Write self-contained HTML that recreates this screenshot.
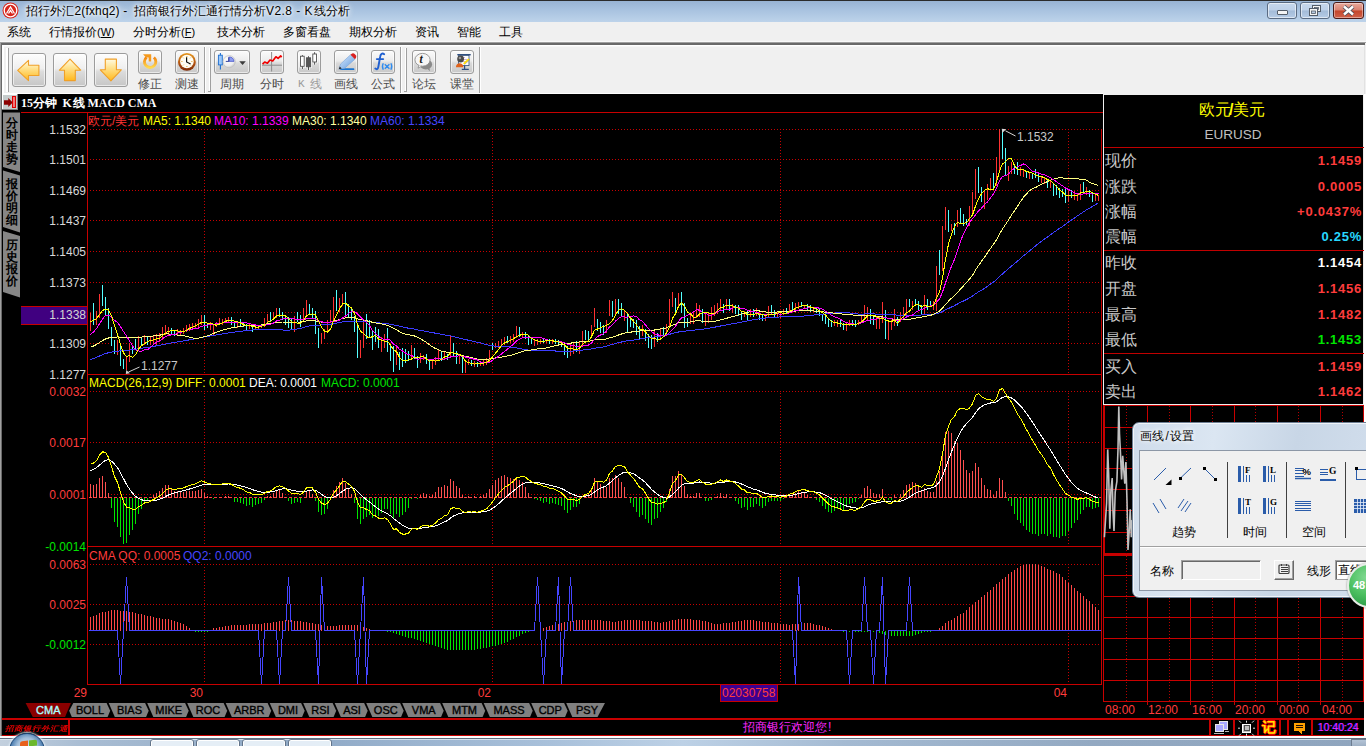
<!DOCTYPE html><html><head><meta charset="utf-8"><title>招行外汇2</title><style>
*{box-sizing:border-box}
html,body{margin:0;padding:0}
body{width:1366px;height:746px;overflow:hidden;background:#000;font-family:"Liberation Sans",sans-serif;font-size:12px;position:relative}
.a{position:absolute;white-space:nowrap}
.t{position:absolute;white-space:nowrap;line-height:14px;height:14px}
.r{text-align:right}
.cj{text-align:justify;text-align-last:justify}
#title{left:0;top:0;width:1366px;height:22px;background:linear-gradient(#98b3d3,#a9c3e0 45%,#bdd3ea);border-top:1px solid #2b2b2b}
#menu{left:0;top:22px;width:1366px;height:21px;background:#f0f0f0}
#tb{left:0;top:43px;width:1366px;height:51px;background:#f0f0f0}
.bigbtn{position:absolute;top:53px;width:34px;height:34px;border:1px solid #9c9c9c;border-radius:3px;background:linear-gradient(#fdfdfd,#efefef 45%,#dcdcdc 55%,#c6c6c6);box-shadow:inset 0 0 0 1px rgba(255,255,255,.6)}
.smbtn{position:absolute;top:50px;width:24px;height:24px;border:1px solid #9c9c9c;border-radius:3px;background:linear-gradient(#fbfbfb,#ececec 45%,#dadada 55%,#c8c8c8);box-shadow:inset 0 0 0 1px rgba(255,255,255,.6)}
.lbl{position:absolute;top:77px;height:14px;line-height:14px;color:#4a4a4a;font-size:12px;white-space:nowrap}
.yl{position:absolute;left:21px;width:65px;text-align:right;height:14px;line-height:14px;font-size:12px;color:#d8d8d8}
.row{position:absolute;left:1104px;width:258px;height:20px}
.row .k{position:absolute;left:1px;top:0;width:32px;font-size:16px;line-height:20px;color:#c8c8c8}
.row .v{position:absolute;right:0px;top:2px;font-size:13px;line-height:16px;font-weight:bold;letter-spacing:0.75px}
.tab{position:absolute;top:704px;height:13px;line-height:13px;font-size:11px;color:#000;text-align:center;-webkit-text-stroke:0.35px currentColor}
</style></head><body>
<div id="title" class="a"></div>
<svg class="a" style="left:2px;top:2px" width="17" height="17" viewBox="0 0 17 17"><circle cx="8.5" cy="8.5" r="8" fill="#d8261c"/><circle cx="8.5" cy="8.5" r="6.3" fill="none" stroke="#fff" stroke-width="1.3"/><path d="M4.5 11.5 L8.5 5 L12.5 11.5 M6.5 11.5 L8.5 8.5 L10.5 11.5" stroke="#fff" stroke-width="1.3" fill="none"/></svg>
<div class="t cj" style="left:26px;top:4px;font-size:12px;color:#000;text-shadow:0 0 6px #fff,0 0 6px #fff,0 0 3px #fff;width:48px">招行外汇</div>
<div class="t" style="left:74.5px;top:4px;font-size:12px;color:#000;text-shadow:0 0 6px #fff,0 0 6px #fff,0 0 3px #fff;letter-spacing:.15px">2(fxhq2) -</div>
<div class="t cj" style="left:134px;top:4px;font-size:12px;color:#000;text-shadow:0 0 6px #fff,0 0 6px #fff,0 0 3px #fff;width:132px">招商银行外汇通行情分析</div>
<div class="t" style="left:266px;top:4px;font-size:12px;color:#000;text-shadow:0 0 6px #fff,0 0 6px #fff,0 0 3px #fff;letter-spacing:.45px">V2.8 - K</div>
<div class="t cj" style="left:314px;top:4px;font-size:12px;color:#000;text-shadow:0 0 6px #fff,0 0 6px #fff,0 0 3px #fff;width:36px">线分析</div>
<div class="a" style="left:1267px;top:2px;width:30px;height:17px;border:1px solid #5a6b82;border-radius:3px;background:linear-gradient(#c6d7ec,#bdd0e8 48%,#a3bbd8 52%,#b6cce6);box-shadow:inset 0 0 0 1px rgba(255,255,255,.55)"></div>
<div class="a" style="left:1277px;top:10px;width:11px;height:5px;border:1px solid #545d69;border-radius:1px;background:#f4f4f4"></div>
<div class="a" style="left:1300px;top:2px;width:30px;height:17px;border:1px solid #5a6b82;border-radius:3px;background:linear-gradient(#c6d7ec,#bdd0e8 48%,#a3bbd8 52%,#b6cce6);box-shadow:inset 0 0 0 1px rgba(255,255,255,.55)"></div>
<svg class="a" style="left:1308px;top:4px" width="14" height="13" viewBox="0 0 14 13"><rect x="4.5" y="1.5" width="8" height="6" fill="#f4f4f4" stroke="#545d69"/><rect x="6.5" y="3.5" width="4" height="2" fill="#b8cbe2" stroke="#545d69" stroke-width=".8"/><rect x="1.5" y="4.5" width="8" height="7" fill="#f4f4f4" stroke="#545d69"/><rect x="3.5" y="7" width="4" height="2.5" fill="#b8cbe2" stroke="#545d69" stroke-width=".8"/></svg>
<div class="a" style="left:1333px;top:2px;width:31px;height:17px;border:1px solid #4a1a18;border-radius:3px;background:linear-gradient(#e7a99c,#d9806f 48%,#c4452b 52%,#d0614a);box-shadow:inset 0 0 0 1px rgba(255,255,255,.4)"></div>
<svg class="a" style="left:1342px;top:5px" width="13" height="11" viewBox="0 0 13 11"><path d="M2 1.5 L11 9.5 M11 1.5 L2 9.5" stroke="#4c4f5c" stroke-width="4.2"/><path d="M2 1.5 L11 9.5 M11 1.5 L2 9.5" stroke="#fff" stroke-width="2.4"/></svg>
<div id="menu" class="a"></div>
<div class="t cj" style="left:7px;top:25px;color:#000;width:24px">系统</div>
<div class="t cj" style="left:49px;top:25px;color:#000;width:48px">行情报价</div>
<div class="t cj" style="left:133px;top:25px;color:#000;width:48px">分时分析</div>
<div class="t cj" style="left:217px;top:25px;color:#000;width:48px">技术分析</div>
<div class="t cj" style="left:283px;top:25px;color:#000;width:48px">多窗看盘</div>
<div class="t cj" style="left:349px;top:25px;color:#000;width:48px">期权分析</div>
<div class="t cj" style="left:415px;top:25px;color:#000;width:24px">资讯</div>
<div class="t cj" style="left:457px;top:25px;color:#000;width:24px">智能</div>
<div class="t cj" style="left:499px;top:25px;color:#000;width:24px">工具</div>
<div class="t" style="left:97px;top:25px;color:#000;font-size:11px">(<u>W</u>)</div>
<div class="t" style="left:181px;top:25px;color:#000;font-size:11px">(<u>F</u>)</div>
<div id="tb" class="a"></div>
<div class="a" style="left:0;top:41px;width:1366px;height:1px;background:#f8f8f8"></div>
<div class="a" style="left:0;top:42px;width:1366px;height:1px;background:#a0a0a0"></div>
<div class="a" style="left:1px;top:43px;width:1364px;height:2px;background:#696969"></div>
<div class="a" style="left:2px;top:45px;width:1362px;height:2px;background:linear-gradient(#fff 50%,#f7f7f7 50%)"></div>
<div class="a" style="left:1364px;top:45px;width:2px;height:49px;background:#f0f0f0;border-left:1px solid #e2e2e2"></div>
<div class="a" style="left:0px;top:42px;width:1px;height:52px;background:#a0a0a0"></div>
<div class="a" style="left:1px;top:43px;width:1px;height:51px;background:#696969"></div>
<div class="a" style="left:2px;top:45px;width:2px;height:49px;background:#fff"></div>
<div class="a" style="left:6px;top:48px;width:2px;height:44px;background:#fff"></div>
<div class="a" style="left:8px;top:48px;width:1px;height:44px;background:#a0a0a0"></div>
<div class="bigbtn" style="left:12px"><svg width="32" height="32" viewBox="0 0 32 32" style="position:absolute;left:0;top:0"><defs><linearGradient id="ag0" x1="0" y1="0" x2="0" y2="1"><stop offset="0" stop-color="#fffbe4"/><stop offset=".4" stop-color="#ffe28e"/><stop offset="1" stop-color="#ffb81c"/></linearGradient></defs><path d="M4.7 16.4 L15.5 6.3 L15.5 11.2 L25.9 11.2 L25.9 21.5 L15.5 21.5 L15.5 26.600 Z" fill="url(#ag0)" stroke="#f0a028" stroke-width="1.1" stroke-linejoin="round"/></svg></div>
<div class="bigbtn" style="left:53px"><svg width="32" height="32" viewBox="0 0 32 32" style="position:absolute;left:0;top:0"><defs><linearGradient id="ag90" x1="0" y1="0" x2="0" y2="1"><stop offset="0" stop-color="#fffbe4"/><stop offset=".4" stop-color="#ffe28e"/><stop offset="1" stop-color="#ffb81c"/></linearGradient></defs><path d="M16 5.1 L26.7 16.2 L21.3 16.2 L21.3 26.600 L10.5 26.600 L10.5 16.2 L5.4 16.2 Z" fill="url(#ag90)" stroke="#f0a028" stroke-width="1.1" stroke-linejoin="round"/></svg></div>
<div class="bigbtn" style="left:94px"><svg width="32" height="32" viewBox="0 0 32 32" style="position:absolute;left:0;top:0"><defs><linearGradient id="ag270" x1="0" y1="0" x2="0" y2="1"><stop offset="0" stop-color="#fffbe4"/><stop offset=".4" stop-color="#ffe28e"/><stop offset="1" stop-color="#ffb81c"/></linearGradient></defs><path d="M15.9 26.9 L5.3 15.8 L10.3 15.8 L10.3 5.1 L21.4 5.1 L21.4 15.8 L26.3 15.8 Z" fill="url(#ag270)" stroke="#f0a028" stroke-width="1.1" stroke-linejoin="round"/></svg></div>
<div class="smbtn" style="left:138px"><svg width="22" height="22" viewBox="0 0 22 22" style="position:absolute;left:0;top:0"><defs><linearGradient id="gfx" x1="0" y1="0" x2="0" y2="1"><stop offset="0" stop-color="#f28410"/><stop offset="1" stop-color="#ffd850"/></linearGradient></defs><path d="M7.6 6.3 A5.700 5.700 0 1 0 14.9 6.5" fill="none" stroke="url(#gfx)" stroke-width="2.9"/><path d="M4 3.300 L12.200 3.300 L12.200 10.500 L9.700 10.500 L9.700 6.600 L7 6.600 Z" fill="#f59a1e"/></svg></div>
<div class="lbl cj" style="left:138px;width:24px;color:#4a4a4a">修正</div>
<div class="smbtn" style="left:175px"><svg width="22" height="22" viewBox="0 0 22 22" style="position:absolute;left:0;top:0"><defs><linearGradient id="gck" x1="0" y1="0" x2="0" y2="1"><stop offset="0" stop-color="#e89a20"/><stop offset=".6" stop-color="#b05010"/><stop offset="1" stop-color="#7a2a08"/></linearGradient></defs><circle cx="10.900" cy="10.900" r="8.900" fill="url(#gck)"/><circle cx="10.900" cy="10.500" r="6.800" fill="#fffef6"/><path d="M10.900 5 v1 M10.900 15 v1 M5.400 10.500 h1 M15.400 10.500 h1 M7 6.600 l.7 .7 M14.800 6.600 l-.7 .7 M7 14.400 l.7 -.7 M14.800 14.400 l-.7 -.7" stroke="#e8a020" stroke-width="1"/><path d="M10.600 6.200 V11 L14.600 13" stroke="#111" stroke-width="1.2" fill="none"/></svg></div>
<div class="lbl cj" style="left:175px;width:24px;color:#4a4a4a">测速</div>
<div class="smbtn" style="left:260px"><svg width="22" height="22" viewBox="0 0 22 22" style="position:absolute;left:0;top:0"><path d="M10.600 1 V20.500 M1 14.200 H21" stroke="#8c8c8c" stroke-width="1"/><path d="M1.600 13.200 L3.700 11 L6.400 12.200 L9 9 L11.700 10 L14.900 5.800 L17.100 7.400 L19.700 4.900 L20.600 6.300" stroke="#f00000" stroke-width="1.700" fill="none" stroke-linejoin="round"/></svg></div>
<div class="lbl cj" style="left:260px;width:24px;color:#4a4a4a">分时</div>
<div class="smbtn" style="left:297px"><svg width="22" height="22" viewBox="0 0 22 22" style="position:absolute;left:0;top:0"><g stroke="#fff" stroke-width="2.400" opacity=".8"><path d="M4.400 4.100 V18 M10.500 5.200 V19 M16.600 1.200 V13.700"/><rect x="2.500" y="5.200" width="3.700" height="10.100" fill="#fff"/><rect x="8.400" y="6.800" width="4.200" height="9" fill="#fff"/><rect x="14.800" y="3" width="3.700" height="8" fill="#fff"/></g><path d="M4.400 4.100 V18 M10.500 5.200 V19 M16.600 1.200 V13.700" stroke="#505050" stroke-width="1"/><rect x="2.500" y="5.200" width="3.700" height="10.100" fill="#fff" stroke="#505050" stroke-width=".9"/><rect x="8.400" y="6.800" width="4.200" height="9" fill="#555" stroke="#505050" stroke-width=".9"/><rect x="14.800" y="3" width="3.700" height="8" fill="#fff" stroke="#505050" stroke-width=".9"/></svg></div>
<div class="lbl" style="left:297px;width:24px;color:#9a9a9a"></div>
<div class="smbtn" style="left:334px"><svg width="22" height="22" viewBox="0 0 22 22" style="position:absolute;left:0;top:0"><defs><linearGradient id="gpn" x1="0" y1="0" x2="1" y2="1"><stop offset="0" stop-color="#dcebfb"/><stop offset=".5" stop-color="#9fc3ee"/><stop offset="1" stop-color="#5f96dc"/></linearGradient></defs><path d="M6 18.200 H18.500" stroke="#1a74d0" stroke-width="1.800" stroke-linecap="round"/><path d="M3.900 18.200 L5.600 13 L15.500 3.800 L20 8.200 L9.600 17.200 Z" fill="url(#gpn)" stroke="#7aa4d8" stroke-width=".6"/><path d="M15.500 3.800 L17.100 2.500 Q18.500 1.900 19.700 3 L21 4.400 Q21.700 5.600 21 6.800 L20 8.200 Z" fill="#d82020"/><path d="M3.900 18.200 L4.700 15.600 L6.700 17.500 Z" fill="#222"/></svg></div>
<div class="lbl cj" style="left:334px;width:24px;color:#4a4a4a">画线</div>
<div class="smbtn" style="left:371px"><svg width="22" height="22" viewBox="0 0 22 22" style="position:absolute;left:0;top:0"><path d="M12.200 3.200 C10.300 1.800 8.600 2.800 8.200 5.500 L6.300 16 C5.900 18.400 4.600 18.600 3.300 17.600 M4.800 8.100 H11.200" stroke="#1f5fd0" stroke-width="1.900" fill="none" stroke-linecap="round"/><g stroke="#2f8cf0" stroke-width="1.300" fill="none"><path d="M11.300 12.300 Q9.500 15.500 11.300 18.800 M18.900 12.300 Q20.700 15.500 18.900 18.800 M12.800 13.300 L17.400 17.800 M17.400 13.300 L12.800 17.800"/></g></svg></div>
<div class="lbl cj" style="left:371px;width:24px;color:#4a4a4a">公式</div>
<div class="smbtn" style="left:412px"><svg width="22" height="22" viewBox="0 0 22 22" style="position:absolute;left:0;top:0"><ellipse cx="12.900" cy="13.400" rx="6.200" ry="5" fill="#8a8a8a"/><path d="M14 17.500 L17 20.200 L16.500 17" fill="#8a8a8a"/><ellipse cx="9.500" cy="8.800" rx="7.600" ry="6.400" fill="#f6f6f6" stroke="#8e8e8e" stroke-width=".9"/><path d="M6 14 L5 17.200 L9 15" fill="#f6f6f6" stroke="#8e8e8e" stroke-width=".8"/><text x="6.500" y="12.400" font-size="11.500" font-weight="bold" font-style="italic" font-family="Liberation Serif" fill="#151515">t</text></svg></div>
<div class="lbl cj" style="left:412px;width:24px;color:#4a4a4a">论坛</div>
<div class="smbtn" style="left:450px"><svg width="22" height="22" viewBox="0 0 22 22" style="position:absolute;left:0;top:0"><rect x="6.300" y="3" width="13.400" height="1.400" fill="#2f4f7f"/><rect x="7.600" y="4.400" width="10.400" height="10.200" fill="#fdfdff" stroke="#2f4f7f" stroke-width=".8"/><path d="M9 6.500 H14 M9 8.500 H16.500 M9 10.500 H15" stroke="#c8a0c0" stroke-width=".8"/><path d="M13.600 14.600 V18.400 M10.800 18.400 H17.800" stroke="#2f4f7f" stroke-width="1.200"/><circle cx="9.600" cy="8" r="3.400" fill="#4a4a4a"/><circle cx="8.900" cy="7" r="1.300" fill="#9a9a9a"/><path d="M4.900 16.300 C4.900 11 12.400 11 12.400 16.300 Z" fill="#e0621a"/><path d="M12.700 12.800 L17.900 8" stroke="#ffe000" stroke-width="1.700"/><path d="M12.700 12.800 L17.900 8" stroke="#806000" stroke-width=".4" transform="translate(.8 .8)"/></svg></div>
<div class="lbl cj" style="left:450px;width:24px;color:#4a4a4a">课堂</div>
<div class="smbtn" style="left:214px;width:36px"><svg width="34" height="22" viewBox="0 0 34 22" style="position:absolute;left:0;top:0"><defs><radialGradient id="gpc" cx=".4" cy=".35" r=".7"><stop offset="0" stop-color="#fff"/><stop offset=".7" stop-color="#ececec"/><stop offset="1" stop-color="#bdbdbd"/></radialGradient></defs><path d="M5.400 2 V18.500" stroke="#1f6fd0" stroke-width="1.100"/><rect x="3.400" y="4.200" width="3.900" height="9.700" fill="#9cc8fa" stroke="#1f6fd0" stroke-width=".9"/><circle cx="14.200" cy="10.700" r="6.100" fill="url(#gpc)" stroke="#c4c4c4" stroke-width=".8"/><path d="M13.800 10.400 L13.800 6 A5 5 0 0 1 19 10.400 Z" fill="#8c9cf0" stroke="#3040c0" stroke-width=".6"/><path d="M13.800 6.500 V10.400 H10.800" stroke="#203090" stroke-width=".9" fill="none"/><path d="M24.300 10.200 L30.800 10.200 L27.550 13.900 Z" fill="#3c3c3c"/></svg></div>
<div class="lbl cj" style="left:220px;width:24px">周期</div>
<div class="lbl" style="left:298px;color:#9a9a9a;font-family:'Liberation Mono',monospace;font-size:11px">K</div>
<div class="lbl" style="left:309.5px;color:#9a9a9a">线</div>
<div class="a" style="left:204px;top:47px;width:1px;height:47px;background:#a0a0a0"></div>
<div class="a" style="left:205px;top:47px;width:1px;height:47px;background:#fff"></div>
<div class="a" style="left:208px;top:48px;width:3px;height:44px;border-right:1px solid #a0a0a0;border-bottom:1px solid #a0a0a0"></div>
<div class="a" style="left:209px;top:48px;width:1px;height:43px;background:#fff"></div>
<div class="a" style="left:400px;top:47px;width:1px;height:47px;background:#a0a0a0"></div>
<div class="a" style="left:401px;top:47px;width:1px;height:47px;background:#fff"></div>
<div class="a" style="left:404px;top:48px;width:3px;height:44px;border-right:1px solid #a0a0a0;border-bottom:1px solid #a0a0a0"></div>
<div class="a" style="left:405px;top:48px;width:1px;height:43px;background:#fff"></div>
<div class="a" style="left:479px;top:47px;width:1px;height:47px;background:#a0a0a0"></div>
<div class="a" style="left:480px;top:47px;width:1px;height:47px;background:#fff"></div>
<div class="a" style="left:2px;top:93px;width:1101px;height:1px;background:#fff"></div>
<div class="a" style="left:0;top:94px;width:1366px;height:652px;background:#000"></div>
<div class="a" style="left:0;top:94px;width:1px;height:643px;background:#a0a0a0"></div>
<div class="a" style="left:1px;top:94px;width:1px;height:643px;background:#696969"></div>
<div class="a" style="left:1364px;top:94px;width:2px;height:643px;background:#fff"></div>
<svg class="a" style="left:2px;top:94px" width="16" height="16" viewBox="0 0 16 16" shape-rendering="crispEdges"><rect width="16" height="16" fill="#c6cccc"/><path d="M0 15.500 V0.500 H16" stroke="#fff" fill="none"/><path d="M0 15.500 H15.500 V0" stroke="#808080" fill="none"/><path d="M2 6.200 H6.300 V4 L10.700 8.500 L6.300 13 V10.800 H2 Z" fill="#8b0000" shape-rendering="auto"/><rect x="10.500" y="2.500" width="3" height="11" fill="#f07878" stroke="#e00000"/></svg>
<div class="t" style="left:21px;top:96px;font-family:'Liberation Serif',serif;font-weight:bold;font-size:12px;color:#fff">15</div>
<div class="t cj" style="left:33px;top:96px;font-family:'Liberation Serif',serif;font-weight:bold;font-size:12px;color:#fff;width:24px">分钟</div>
<div class="t" style="left:62.5px;top:96px;font-family:'Liberation Serif',serif;font-weight:bold;font-size:12px;color:#fff">K</div>
<div class="t" style="left:72.5px;top:96px;font-family:'Liberation Serif',serif;font-weight:bold;font-size:12px;color:#fff">线</div>
<div class="t" style="left:87.5px;top:96px;font-family:'Liberation Serif',serif;font-weight:bold;font-size:12px;color:#fff">MACD CMA</div>
<svg class="a" style="left:0;top:112px" width="22" height="190" viewBox="0 0 22 190"><path d="M3 0.5 H20 V60 L3 55 Z M3 58.500 L20 63.500 V120.500 L3 115 Z M3 119 L20 124 V185.500 L3 180 Z" fill="#868686"/></svg>
<div class="t" style="left:5px;top:117px;width:14px;text-align:center;font-size:12px;font-weight:bold;color:#000;line-height:12px;height:12px">分</div>
<div class="t" style="left:5px;top:129px;width:14px;text-align:center;font-size:12px;font-weight:bold;color:#000;line-height:12px;height:12px">时</div>
<div class="t" style="left:5px;top:141px;width:14px;text-align:center;font-size:12px;font-weight:bold;color:#000;line-height:12px;height:12px">走</div>
<div class="t" style="left:5px;top:153px;width:14px;text-align:center;font-size:12px;font-weight:bold;color:#000;line-height:12px;height:12px">势</div>
<div class="t" style="left:5px;top:178px;width:14px;text-align:center;font-size:12px;font-weight:bold;color:#000;line-height:12px;height:12px">报</div>
<div class="t" style="left:5px;top:190px;width:14px;text-align:center;font-size:12px;font-weight:bold;color:#000;line-height:12px;height:12px">价</div>
<div class="t" style="left:5px;top:202px;width:14px;text-align:center;font-size:12px;font-weight:bold;color:#000;line-height:12px;height:12px">明</div>
<div class="t" style="left:5px;top:214px;width:14px;text-align:center;font-size:12px;font-weight:bold;color:#000;line-height:12px;height:12px">细</div>
<div class="t" style="left:5px;top:239px;width:14px;text-align:center;font-size:12px;font-weight:bold;color:#000;line-height:12px;height:12px">历</div>
<div class="t" style="left:5px;top:251px;width:14px;text-align:center;font-size:12px;font-weight:bold;color:#000;line-height:12px;height:12px">史</div>
<div class="t" style="left:5px;top:263px;width:14px;text-align:center;font-size:12px;font-weight:bold;color:#000;line-height:12px;height:12px">报</div>
<div class="t" style="left:5px;top:275px;width:14px;text-align:center;font-size:12px;font-weight:bold;color:#000;line-height:12px;height:12px">价</div>
<div class="yl" style="top:123px">1.1532</div>
<div class="yl" style="top:153px">1.1501</div>
<div class="yl" style="top:184px">1.1469</div>
<div class="yl" style="top:214px">1.1437</div>
<div class="yl" style="top:245px">1.1405</div>
<div class="yl" style="top:276px">1.1373</div>
<div class="yl" style="top:337px">1.1309</div>
<div class="yl" style="top:368px">1.1277</div>
<div class="a" style="left:21px;top:306px;width:66px;height:19px;background:#400080;border-top:1px solid #c80000;border-bottom:1px solid #c80000"></div>
<div class="yl" style="top:308px;color:#d4d4d4">1.1338</div>
<div class="yl" style="top:385px;color:#ff3c3c">0.0032</div>
<div class="yl" style="top:436px;color:#ff3c3c">0.0017</div>
<div class="yl" style="top:488px;color:#ff3c3c">0.0001</div>
<div class="yl" style="top:540px;color:#00e600">-0.0014</div>
<div class="yl" style="top:558px;color:#ff3c3c">0.0063</div>
<div class="yl" style="top:598px;color:#ff3c3c">0.0025</div>
<div class="yl" style="top:638px;color:#00e600">-0.0012</div>
<svg class="a" style="left:0;top:0" width="1366" height="746" viewBox="0 0 1366 746" shape-rendering="crispEdges"><line x1="90.0" y1="129.5" x2="1101.0" y2="129.5" stroke="#c80000" stroke-width="1" stroke-dasharray="1 2"/>
<line x1="90.0" y1="159.5" x2="1101.0" y2="159.5" stroke="#c80000" stroke-width="1" stroke-dasharray="1 2"/>
<line x1="90.0" y1="190.5" x2="1101.0" y2="190.5" stroke="#c80000" stroke-width="1" stroke-dasharray="1 2"/>
<line x1="90.0" y1="220.5" x2="1101.0" y2="220.5" stroke="#c80000" stroke-width="1" stroke-dasharray="1 2"/>
<line x1="90.0" y1="251.5" x2="1101.0" y2="251.5" stroke="#c80000" stroke-width="1" stroke-dasharray="1 2"/>
<line x1="90.0" y1="282.5" x2="1101.0" y2="282.5" stroke="#c80000" stroke-width="1" stroke-dasharray="1 2"/>
<line x1="90.0" y1="312.5" x2="1101.0" y2="312.5" stroke="#c80000" stroke-width="1" stroke-dasharray="1 2"/>
<line x1="90.0" y1="343.5" x2="1101.0" y2="343.5" stroke="#c80000" stroke-width="1" stroke-dasharray="1 2"/>
<line x1="90.0" y1="391.5" x2="1101.0" y2="391.5" stroke="#c80000" stroke-width="1" stroke-dasharray="1 2"/>
<line x1="90.0" y1="442.5" x2="1101.0" y2="442.5" stroke="#c80000" stroke-width="1" stroke-dasharray="1 2"/>
<line x1="90.0" y1="494.5" x2="1101.0" y2="494.5" stroke="#c80000" stroke-width="1" stroke-dasharray="1 2"/>
<line x1="90.0" y1="564.5" x2="1101.0" y2="564.5" stroke="#c80000" stroke-width="1" stroke-dasharray="1 2"/>
<line x1="90.0" y1="604.5" x2="1101.0" y2="604.5" stroke="#c80000" stroke-width="1" stroke-dasharray="1 2"/>
<line x1="90.0" y1="644.5" x2="1101.0" y2="644.5" stroke="#c80000" stroke-width="1" stroke-dasharray="1 2"/>
<line x1="204.5" y1="132.0" x2="204.5" y2="374.0" stroke="#c80000" stroke-width="1" stroke-dasharray="1 2"/>
<line x1="204.5" y1="393.0" x2="204.5" y2="546.0" stroke="#c80000" stroke-width="1" stroke-dasharray="1 2"/>
<line x1="204.5" y1="567.0" x2="204.5" y2="684.0" stroke="#c80000" stroke-width="1" stroke-dasharray="1 2"/>
<line x1="492.5" y1="132.0" x2="492.5" y2="374.0" stroke="#c80000" stroke-width="1" stroke-dasharray="1 2"/>
<line x1="492.5" y1="393.0" x2="492.5" y2="546.0" stroke="#c80000" stroke-width="1" stroke-dasharray="1 2"/>
<line x1="492.5" y1="567.0" x2="492.5" y2="684.0" stroke="#c80000" stroke-width="1" stroke-dasharray="1 2"/>
<line x1="780.5" y1="132.0" x2="780.5" y2="374.0" stroke="#c80000" stroke-width="1" stroke-dasharray="1 2"/>
<line x1="780.5" y1="393.0" x2="780.5" y2="546.0" stroke="#c80000" stroke-width="1" stroke-dasharray="1 2"/>
<line x1="780.5" y1="567.0" x2="780.5" y2="684.0" stroke="#c80000" stroke-width="1" stroke-dasharray="1 2"/>
<line x1="1068.5" y1="132.0" x2="1068.5" y2="374.0" stroke="#c80000" stroke-width="1" stroke-dasharray="1 2"/>
<line x1="1068.5" y1="393.0" x2="1068.5" y2="546.0" stroke="#c80000" stroke-width="1" stroke-dasharray="1 2"/>
<line x1="1068.5" y1="567.0" x2="1068.5" y2="684.0" stroke="#c80000" stroke-width="1" stroke-dasharray="1 2"/>
<line x1="21.0" y1="112.5" x2="1103.0" y2="112.5" stroke="#c80000" stroke-width="1"/>
<line x1="87.0" y1="374.5" x2="1102.0" y2="374.5" stroke="#c80000" stroke-width="1"/>
<line x1="87.0" y1="546.5" x2="1102.0" y2="546.5" stroke="#c80000" stroke-width="1"/>
<line x1="87.0" y1="684.5" x2="1102.0" y2="684.5" stroke="#c80000" stroke-width="1"/>
<line x1="87.5" y1="112.0" x2="87.5" y2="685.0" stroke="#c80000" stroke-width="1"/>
<line x1="1101.5" y1="129.0" x2="1101.5" y2="685.0" stroke="#c80000" stroke-width="1"/>
<path d="M90.5 313.0V331.0M96.5 311.0V325.0M99.5 294.0V318.0M117.5 340.0V355.0M126.5 357.0V370.0M129.5 343.0V362.0M138.5 336.0V348.0M144.5 334.6V344.6M150.5 336.9V344.6M153.5 336.0V344.6M156.5 333.8V345.3M159.5 333.0V341.5M162.5 326.9V340.0M165.5 324.6V334.6M168.5 326.9V335.3M177.5 329.0V336.0M180.5 330.0V334.6M183.5 327.7V333.8M186.5 324.6V332.3M189.5 323.8V330.7M192.5 323.0V329.2M195.5 323.0V327.7M198.5 319.2V326.9M201.5 314.6V325.3M210.5 322.3V330.0M213.5 323.8V334.6M216.5 321.5V326.9M219.5 318.4V325.3M222.5 319.2V324.6M225.5 317.7V323.0M228.5 316.9V322.3M237.5 321.5V327.7M249.5 323.0V329.2M255.5 323.8V330.0M258.5 324.6V329.2M261.5 323.8V327.7M264.5 317.7V326.9M267.5 313.8V324.6M273.5 312.3V320.0M276.5 307.7V317.7M294.5 316.0V332.3M303.5 308.4V322.3M306.5 300.0V316.9M321.5 333.0V343.8M324.5 329.2V339.2M327.5 320.0V331.5M330.5 310.0V323.0M333.5 296.9V321.5M339.5 298.4V312.3M342.5 293.8V306.0M360.5 340.0V358.0M363.5 321.0V348.0M381.5 337.0V352.0M384.5 334.0V348.0M396.5 346.0V365.0M411.5 345.0V359.0M420.5 353.0V363.0M423.5 355.0V360.0M432.5 359.0V369.0M435.5 357.0V365.0M438.5 350.0V360.0M444.5 352.0V360.0M450.5 336.0V358.0M459.5 356.0V364.0M465.5 362.0V373.0M468.5 359.0V365.0M474.5 361.0V367.0M480.5 361.0V366.0M483.5 360.0V366.0M486.5 358.0V365.0M489.5 350.0V362.0M495.5 343.0V348.0M498.5 341.0V348.0M501.5 339.0V346.0M504.5 337.0V345.0M510.5 336.0V343.0M513.5 334.0V342.0M516.5 326.0V338.0M522.5 332.0V338.0M534.5 340.0V346.0M537.5 339.0V345.0M540.5 339.0V344.0M546.5 338.5V343.0M552.5 338.5V343.5M570.5 344.0V356.0M573.5 343.0V354.0M579.5 342.0V354.0M582.5 331.0V346.0M591.5 325.0V338.0M594.5 308.0V327.0M606.5 320.0V333.0M609.5 299.5V316.0M615.5 298.5V314.0M624.5 311.0V321.0M642.5 325.0V336.0M654.5 329.0V347.0M660.5 329.0V338.5M666.5 324.0V334.0M669.5 298.5V327.0M672.5 292.0V307.0M678.5 293.0V308.0M690.5 315.0V324.0M693.5 311.0V324.0M696.5 303.0V317.6M699.5 305.0V316.6M705.5 314.0V326.0M708.5 312.0V323.0M711.5 307.0V319.5M714.5 305.0V315.7M717.5 303.0V314.0M720.5 298.5V311.0M726.5 298.5V309.0M732.5 304.0V313.0M744.5 311.0V316.6M750.5 309.0V316.6M756.5 308.0V315.7M765.5 314.0V321.0M768.5 306.0V316.6M777.5 313.0V317.6M780.5 313.0V317.6M783.5 309.0V314.7M789.5 304.0V311.0M795.5 303.0V310.0M798.5 302.0V309.0M804.5 305.0V309.0M813.5 307.0V312.0M834.5 319.5V326.0M837.5 320.0V327.0M846.5 322.0V331.0M849.5 320.0V326.0M858.5 320.0V325.0M861.5 315.0V322.0M864.5 305.0V318.0M867.5 307.0V320.0M876.5 317.3V328.5M879.5 317.3V328.5M882.5 302.3V323.0M888.5 322.0V339.8M891.5 320.0V330.4M894.5 308.8V325.7M900.5 311.7V322.0M903.5 307.0V320.0M906.5 299.0V316.3M912.5 301.3V309.8M924.5 294.8V314.5M933.5 301.3V309.8M936.5 265.7V310.7M942.5 226.3V271.3M945.5 207.0V230.0M951.5 223.5V231.0M957.5 210.3V227.2M969.5 206.0V226.3M972.5 192.3V212.8M975.5 168.8V199.0M984.5 190.3V208.9M987.5 184.4V200.0M990.5 177.6V190.3M996.5 157.0V186.4M999.5 129.2V169.8M1008.5 165.8V180.5M1011.5 161.9V173.7M1020.5 166.8V175.6M1023.5 168.8V176.6M1029.5 171.7V178.6M1041.5 175.6V182.5M1044.5 177.6V184.4M1050.5 179.5V188.3M1068.5 190.3V202.0M1074.5 191.3V200.0M1077.5 193.2V201.0M1080.5 184.4V200.0M1086.5 187.4V195.2M1095.5 194.2V201.0M1098.5 195.2V201.0" stroke="#ff3232" fill="none"/>
<path d="M93.5 303.0V325.0M102.5 285.0V306.0M105.5 297.0V315.0M108.5 308.0V329.0M111.5 327.0V346.0M114.5 340.0V354.0M120.5 346.0V366.0M123.5 359.0V369.0M132.5 346.0V354.0M135.5 339.0V350.0M141.5 337.6V344.6M147.5 336.9V345.3M171.5 327.7V335.3M174.5 330.0V336.0M204.5 315.0V330.0M207.5 323.0V328.4M231.5 316.9V324.6M234.5 320.7V328.4M240.5 319.2V326.0M243.5 321.5V326.9M246.5 323.8V330.7M252.5 324.6V332.3M270.5 312.0V322.3M279.5 307.7V316.9M282.5 311.5V320.0M285.5 314.6V324.6M288.5 316.9V328.4M291.5 319.2V330.0M297.5 312.3V322.3M300.5 315.4V326.9M309.5 303.8V315.4M312.5 307.7V319.2M315.5 310.7V333.8M318.5 327.7V347.6M336.5 290.0V310.7M345.5 292.3V315.4M348.5 304.0V318.0M351.5 308.0V320.0M354.5 316.0V332.0M357.5 325.0V358.0M366.5 314.0V339.0M369.5 320.0V337.0M372.5 331.0V350.0M375.5 327.0V342.0M378.5 329.0V348.0M387.5 328.0V352.0M390.5 346.0V361.0M393.5 346.0V372.0M399.5 352.0V370.0M402.5 348.0V367.0M405.5 349.0V363.0M408.5 351.0V361.0M414.5 348.0V359.0M417.5 356.0V368.0M426.5 354.0V364.0M429.5 359.0V370.0M441.5 351.0V361.0M447.5 354.0V360.0M453.5 343.0V356.0M456.5 351.0V364.0M462.5 357.0V373.0M471.5 360.0V366.0M477.5 362.0V367.0M492.5 343.0V350.0M507.5 336.0V343.0M519.5 327.0V337.0M525.5 332.0V339.0M528.5 336.0V345.0M531.5 338.0V344.0M543.5 339.0V343.0M549.5 339.0V344.0M555.5 339.0V344.0M558.5 340.0V345.0M561.5 341.0V347.0M564.5 343.0V355.0M567.5 346.0V358.0M576.5 341.0V352.0M585.5 330.0V340.0M588.5 331.0V341.0M597.5 319.0V331.0M600.5 322.0V333.0M603.5 325.0V335.0M612.5 301.0V317.0M618.5 298.5V314.0M621.5 303.0V316.0M627.5 314.0V333.0M630.5 317.0V327.0M633.5 318.5V328.0M636.5 320.0V335.0M639.5 326.0V338.5M645.5 329.0V341.0M648.5 334.0V348.0M651.5 335.0V349.0M657.5 333.0V342.0M663.5 327.0V336.0M675.5 297.6V312.0M681.5 292.0V313.0M684.5 303.0V328.0M687.5 317.6V327.0M702.5 309.0V323.0M723.5 304.0V313.0M729.5 298.5V311.0M735.5 305.0V314.0M738.5 305.0V315.7M741.5 311.0V319.5M747.5 311.0V321.0M753.5 309.0V316.6M759.5 313.0V319.5M762.5 314.0V321.0M771.5 305.0V314.7M774.5 310.0V316.6M786.5 308.0V314.0M792.5 302.0V311.0M801.5 302.0V307.0M807.5 304.0V311.0M810.5 305.0V312.0M816.5 307.0V313.0M819.5 308.0V315.7M822.5 314.0V321.0M825.5 315.7V324.0M828.5 318.5V327.0M831.5 319.5V327.0M840.5 320.0V327.0M843.5 323.0V330.0M852.5 320.0V326.0M855.5 320.0V327.0M870.5 308.8V323.9M873.5 315.4V324.8M885.5 309.8V338.9M897.5 317.3V325.7M909.5 299.0V307.0M915.5 299.0V305.0M918.5 301.3V310.7M921.5 305.0V314.5M927.5 299.0V309.8M930.5 301.3V307.0M939.5 249.7V275.0M948.5 210.3V232.0M954.5 222.5V234.7M960.5 207.9V224.4M963.5 214.0V226.3M966.5 218.8V225.3M978.5 166.8V193.0M981.5 187.4V202.0M993.5 172.7V188.3M1002.5 130.6V159.0M1005.5 148.2V175.6M1014.5 165.8V173.7M1017.5 161.9V174.6M1026.5 170.7V177.6M1032.5 172.7V178.6M1035.5 168.8V177.6M1038.5 173.7V181.5M1047.5 179.5V188.3M1053.5 182.5V196.2M1056.5 185.4V195.2M1059.5 188.3V198.1M1062.5 189.3V197.1M1065.5 189.3V203.0M1071.5 190.3V198.1M1083.5 181.5V193.2M1089.5 190.3V197.1M1092.5 193.2V202.0" stroke="#54ffff" fill="none"/>
<polyline points="90.5,359.5 93.5,358.5 96.5,357.4 99.5,356.0 102.5,354.7 105.5,353.6 108.5,352.7 111.5,352.1 114.5,351.7 117.5,351.1 120.5,350.9 123.5,350.8 126.5,350.5 129.5,350.1 132.5,349.8 135.5,349.3 138.5,348.8 141.5,348.3 144.5,347.8 147.5,347.4 150.5,346.9 153.5,346.4 156.5,345.8 159.5,345.3 162.5,344.7 165.5,344.1 168.5,343.5 171.5,343.0 174.5,342.5 177.5,341.9 180.5,341.4 183.5,340.9 186.5,340.4 189.5,339.8 192.5,339.2 195.5,338.7 198.5,338.1 201.5,337.4 204.5,337.0 207.5,336.5 210.5,336.0 213.5,335.5 216.5,335.0 219.5,334.5 222.5,334.0 225.5,333.5 228.5,332.9 231.5,332.5 234.5,332.1 237.5,331.7 240.5,331.3 243.5,331.0 246.5,330.7 249.5,330.3 252.5,330.0 255.5,329.6 258.5,329.6 261.5,329.7 264.5,329.6 267.5,329.5 270.5,329.6 273.5,329.5 276.5,329.4 279.5,329.7 282.5,330.0 285.5,330.1 288.5,330.2 291.5,329.9 294.5,329.4 297.5,329.0 300.5,328.4 303.5,327.5 306.5,326.5 309.5,326.0 312.5,325.4 315.5,325.1 318.5,325.1 321.5,325.0 324.5,324.9 327.5,324.6 330.5,324.2 333.5,323.6 336.5,323.1 339.5,322.5 342.5,321.9 345.5,321.7 348.5,321.4 351.5,321.2 354.5,321.1 357.5,321.4 360.5,321.6 363.5,321.6 366.5,321.7 369.5,321.8 372.5,322.2 375.5,322.4 378.5,322.8 381.5,323.2 384.5,323.4 387.5,323.7 390.5,324.3 393.5,324.9 396.5,325.4 399.5,326.2 402.5,326.9 405.5,327.6 408.5,328.2 411.5,328.7 414.5,329.1 417.5,329.9 420.5,330.4 423.5,330.9 426.5,331.4 429.5,332.1 432.5,332.6 435.5,333.2 438.5,333.7 441.5,334.2 444.5,334.8 447.5,335.5 450.5,335.8 453.5,336.5 456.5,337.4 459.5,338.1 462.5,338.9 465.5,339.6 468.5,340.2 471.5,340.8 474.5,341.5 477.5,342.3 480.5,342.9 483.5,343.7 486.5,344.7 489.5,345.3 492.5,345.9 495.5,346.1 498.5,346.1 501.5,346.2 504.5,346.3 507.5,346.6 510.5,347.1 513.5,347.6 516.5,348.0 519.5,348.5 522.5,349.2 525.5,349.6 528.5,350.1 531.5,350.5 534.5,350.7 537.5,350.5 540.5,350.5 543.5,350.7 546.5,350.8 549.5,351.0 552.5,350.9 555.5,351.0 558.5,351.0 561.5,351.0 564.5,351.3 567.5,351.4 570.5,351.3 573.5,350.9 576.5,350.9 579.5,350.5 582.5,350.1 585.5,349.7 588.5,349.4 591.5,349.0 594.5,348.3 597.5,347.7 600.5,347.3 603.5,346.9 606.5,346.2 609.5,345.2 612.5,344.4 615.5,343.4 618.5,342.7 621.5,342.0 624.5,341.3 627.5,340.8 630.5,340.5 633.5,340.1 636.5,339.6 639.5,339.2 642.5,338.5 645.5,338.1 648.5,337.8 651.5,337.5 654.5,337.0 657.5,336.6 660.5,336.1 663.5,335.6 666.5,335.0 669.5,334.3 672.5,333.4 675.5,332.8 678.5,332.0 681.5,331.5 684.5,331.2 687.5,330.9 690.5,330.6 693.5,330.2 696.5,329.8 699.5,329.4 702.5,329.2 705.5,328.8 708.5,328.3 711.5,327.8 714.5,327.2 717.5,326.6 720.5,326.0 723.5,325.5 726.5,324.8 729.5,324.3 732.5,323.7 735.5,323.2 738.5,322.7 741.5,322.2 744.5,321.5 747.5,320.9 750.5,320.3 753.5,319.8 756.5,319.2 759.5,318.7 762.5,318.5 765.5,318.1 768.5,317.6 771.5,317.3 774.5,317.4 777.5,317.1 780.5,316.9 783.5,316.5 786.5,316.3 789.5,316.4 792.5,316.3 795.5,316.3 798.5,316.2 801.5,316.1 804.5,316.0 807.5,315.6 810.5,315.4 813.5,315.1 816.5,314.8 819.5,314.4 822.5,314.3 825.5,314.0 828.5,313.7 831.5,313.3 834.5,313.1 837.5,312.8 840.5,312.7 843.5,312.6 846.5,312.6 849.5,312.9 852.5,313.4 855.5,313.6 858.5,314.1 861.5,314.2 864.5,314.0 867.5,313.7 870.5,313.8 873.5,313.9 876.5,314.1 879.5,314.3 882.5,314.1 885.5,314.4 888.5,314.6 891.5,314.8 894.5,314.9 897.5,315.2 900.5,315.4 903.5,315.4 906.5,315.4 909.5,315.4 912.5,315.3 915.5,315.2 918.5,315.1 921.5,315.0 924.5,314.8 927.5,314.6 930.5,314.5 933.5,314.3 936.5,313.8 939.5,312.9 942.5,311.6 945.5,309.8 948.5,308.5 951.5,307.0 954.5,305.6 957.5,304.0 960.5,302.4 963.5,301.0 966.5,299.5 969.5,297.9 972.5,296.0 975.5,293.9 978.5,291.9 981.5,290.2 984.5,288.3 987.5,286.3 990.5,284.1 993.5,282.1 996.5,279.6 999.5,276.7 1002.5,273.9 1005.5,271.3 1008.5,268.7 1011.5,266.0 1014.5,263.6 1017.5,261.1 1020.5,258.5 1023.5,255.8 1026.5,253.4 1029.5,250.9 1032.5,248.4 1035.5,245.9 1038.5,243.6 1041.5,241.3 1044.5,239.1 1047.5,237.1 1050.5,234.7 1053.5,232.6 1056.5,230.5 1059.5,228.4 1062.5,226.5 1065.5,224.3 1068.5,222.1 1071.5,220.0 1074.5,218.0 1077.5,215.9 1080.5,213.8 1083.5,211.8 1086.5,209.9 1089.5,208.1 1092.5,206.4 1095.5,204.6 1098.5,202.7" fill="none" stroke="#3c3cff" stroke-width="1" />
<polyline points="90.5,347.3 93.5,346.0 96.5,344.5 99.5,342.5 102.5,340.6 105.5,339.0 108.5,338.0 111.5,337.5 114.5,337.3 117.5,337.0 120.5,337.2 123.5,337.7 126.5,337.9 129.5,337.7 132.5,337.8 135.5,337.7 138.5,337.3 141.5,337.1 144.5,336.7 147.5,336.6 150.5,336.3 153.5,336.0 156.5,335.6 159.5,335.2 162.5,334.6 165.5,333.9 168.5,334.0 171.5,334.3 174.5,334.8 177.5,335.1 180.5,335.5 183.5,335.8 186.5,336.3 189.5,337.1 192.5,337.9 195.5,338.3 198.5,338.2 201.5,337.4 204.5,336.6 207.5,336.0 210.5,334.8 213.5,333.4 216.5,332.2 219.5,331.3 222.5,330.2 225.5,329.3 228.5,328.6 231.5,327.9 234.5,327.6 237.5,326.9 240.5,326.4 243.5,326.0 246.5,325.8 249.5,325.4 252.5,325.4 255.5,325.4 258.5,325.3 261.5,325.0 264.5,324.5 267.5,324.0 270.5,323.6 273.5,323.1 276.5,322.6 279.5,322.2 282.5,322.0 285.5,322.0 288.5,322.1 291.5,322.5 294.5,322.3 297.5,322.0 300.5,322.0 303.5,321.5 306.5,320.9 309.5,320.7 312.5,320.6 315.5,320.9 318.5,321.7 321.5,322.1 324.5,322.3 327.5,322.3 330.5,321.9 333.5,321.1 336.5,320.3 339.5,319.6 342.5,318.4 345.5,318.0 348.5,317.6 351.5,317.4 354.5,317.6 357.5,318.8 360.5,319.6 363.5,320.0 366.5,320.8 369.5,321.4 372.5,322.3 375.5,322.9 378.5,323.5 381.5,323.9 384.5,324.5 387.5,325.4 390.5,326.5 393.5,328.3 396.5,329.9 399.5,331.6 402.5,333.2 405.5,334.2 408.5,334.7 411.5,335.2 414.5,336.0 417.5,337.4 420.5,338.8 423.5,340.6 426.5,342.5 429.5,344.7 432.5,346.9 435.5,348.5 438.5,349.7 441.5,351.1 444.5,351.9 447.5,352.2 450.5,352.1 453.5,353.0 456.5,353.9 459.5,354.7 462.5,355.5 465.5,356.4 468.5,356.9 471.5,357.7 474.5,358.6 477.5,359.2 480.5,359.3 483.5,359.2 486.5,359.5 489.5,359.0 492.5,358.6 495.5,358.0 498.5,357.5 501.5,357.2 504.5,356.6 507.5,355.9 510.5,355.3 513.5,354.6 516.5,353.5 519.5,352.4 522.5,351.5 525.5,350.7 528.5,350.4 531.5,349.9 534.5,349.5 537.5,348.9 540.5,348.9 543.5,348.5 546.5,347.8 549.5,347.3 552.5,346.3 555.5,345.6 558.5,345.0 561.5,344.4 564.5,344.0 567.5,343.7 570.5,343.2 573.5,342.6 576.5,342.3 579.5,342.0 582.5,341.6 585.5,341.4 588.5,341.2 591.5,340.8 594.5,339.9 597.5,339.5 600.5,339.3 603.5,339.2 606.5,339.0 609.5,337.9 612.5,337.3 615.5,336.1 618.5,335.0 621.5,334.0 624.5,333.1 627.5,332.7 630.5,332.2 633.5,331.6 636.5,331.4 639.5,331.1 642.5,330.7 645.5,330.6 648.5,330.6 651.5,330.6 654.5,330.0 657.5,329.5 660.5,328.9 663.5,328.6 666.5,327.8 669.5,326.5 672.5,325.2 675.5,324.2 678.5,322.8 681.5,322.1 684.5,322.5 687.5,322.4 690.5,321.9 693.5,321.3 696.5,320.7 699.5,320.9 702.5,321.1 705.5,321.6 708.5,321.7 711.5,321.6 714.5,321.4 717.5,320.6 720.5,319.8 723.5,319.3 726.5,318.3 729.5,317.4 732.5,316.7 735.5,315.8 738.5,314.7 741.5,313.8 744.5,313.1 747.5,312.4 750.5,311.7 753.5,311.1 756.5,310.5 759.5,311.0 762.5,311.8 765.5,312.0 768.5,312.4 771.5,312.5 774.5,312.3 777.5,311.9 780.5,311.8 783.5,311.7 786.5,311.9 789.5,311.9 792.5,311.5 795.5,311.1 798.5,310.7 801.5,310.6 804.5,310.6 807.5,310.7 810.5,311.0 813.5,310.9 816.5,311.3 819.5,311.5 822.5,311.9 825.5,312.2 828.5,312.6 831.5,312.9 834.5,313.2 837.5,313.3 840.5,313.8 843.5,314.2 846.5,314.7 849.5,314.8 852.5,315.0 855.5,315.3 858.5,315.7 861.5,315.9 864.5,315.6 867.5,315.5 870.5,315.7 873.5,316.1 876.5,316.4 879.5,316.8 882.5,316.8 885.5,317.7 888.5,318.4 891.5,319.0 894.5,319.2 897.5,319.7 900.5,319.8 903.5,319.9 906.5,319.6 909.5,319.3 912.5,318.7 915.5,318.1 918.5,317.6 921.5,317.1 924.5,316.4 927.5,315.9 930.5,315.3 933.5,314.4 936.5,312.8 939.5,311.1 942.5,308.1 945.5,304.4 948.5,301.2 951.5,298.2 954.5,295.7 957.5,292.5 960.5,289.1 963.5,285.8 966.5,282.6 969.5,279.0 972.5,275.3 975.5,270.1 978.5,265.5 981.5,261.3 984.5,257.4 987.5,252.9 990.5,248.4 993.5,244.3 996.5,239.6 999.5,234.0 1002.5,229.0 1005.5,224.6 1008.5,219.9 1011.5,215.0 1014.5,210.7 1017.5,206.2 1020.5,201.6 1023.5,197.2 1026.5,193.9 1029.5,190.7 1032.5,188.7 1035.5,187.5 1038.5,185.9 1041.5,184.3 1044.5,182.6 1047.5,181.7 1050.5,180.3 1053.5,179.3 1056.5,178.3 1059.5,177.8 1062.5,177.8 1065.5,178.6 1068.5,178.8 1071.5,178.7 1074.5,178.7 1077.5,178.9 1080.5,179.1 1083.5,179.3 1086.5,180.2 1089.5,182.1 1092.5,183.7 1095.5,184.5 1098.5,185.5" fill="none" stroke="#ffff80" stroke-width="1" />
<polyline points="90.5,334.6 93.5,331.9 96.5,328.6 99.5,323.7 102.5,319.1 105.5,315.5 108.5,315.2 111.5,317.2 114.5,320.2 117.5,322.3 120.5,326.8 123.5,331.5 126.5,336.0 129.5,340.8 132.5,345.9 135.5,349.6 138.5,351.0 141.5,351.1 144.5,349.7 147.5,349.7 150.5,347.4 153.5,344.5 156.5,342.2 159.5,340.9 162.5,338.7 165.5,336.6 168.5,335.6 171.5,334.7 174.5,334.5 177.5,333.2 180.5,332.4 183.5,331.5 186.5,330.5 189.5,329.6 192.5,329.0 195.5,328.8 198.5,328.0 201.5,326.3 204.5,325.5 207.5,325.2 210.5,324.5 213.5,324.2 216.5,323.8 219.5,323.3 222.5,322.9 225.5,322.4 228.5,322.1 231.5,322.7 234.5,322.7 237.5,322.3 240.5,322.3 243.5,322.3 246.5,322.9 249.5,323.4 252.5,324.4 255.5,325.0 258.5,325.8 261.5,325.9 264.5,325.2 267.5,324.6 270.5,324.1 273.5,323.0 276.5,321.0 279.5,320.1 282.5,318.8 285.5,318.6 288.5,318.6 291.5,318.9 294.5,318.9 297.5,319.3 300.5,319.7 303.5,319.4 306.5,318.8 309.5,318.6 312.5,318.5 315.5,319.1 318.5,320.8 321.5,321.6 324.5,322.8 327.5,323.0 330.5,321.9 333.5,321.0 336.5,321.2 339.5,320.1 342.5,318.1 345.5,316.2 348.5,313.4 351.5,311.6 354.5,311.3 357.5,314.1 360.5,317.2 363.5,319.7 366.5,322.4 369.5,325.6 372.5,330.5 375.5,333.4 378.5,336.3 381.5,338.6 384.5,339.4 387.5,339.0 390.5,340.4 393.5,344.3 396.5,346.0 399.5,349.3 402.5,351.0 405.5,353.1 408.5,354.6 411.5,355.4 414.5,357.3 417.5,359.2 420.5,358.9 423.5,357.9 426.5,359.1 429.5,359.2 432.5,359.1 435.5,358.9 438.5,358.3 441.5,359.4 444.5,359.1 447.5,358.4 450.5,357.0 453.5,356.7 456.5,356.6 459.5,355.6 462.5,356.5 465.5,357.0 468.5,357.8 471.5,358.4 474.5,359.3 477.5,360.0 480.5,362.1 483.5,362.9 486.5,362.8 489.5,362.3 492.5,360.2 495.5,358.1 498.5,356.4 501.5,353.9 504.5,351.6 507.5,349.1 510.5,346.7 513.5,344.1 516.5,341.0 519.5,339.3 522.5,337.7 525.5,337.1 528.5,337.1 531.5,337.3 534.5,337.6 537.5,337.5 540.5,337.7 543.5,338.4 546.5,339.5 549.5,340.3 552.5,340.9 555.5,341.4 558.5,341.5 561.5,341.8 564.5,342.9 567.5,344.4 570.5,345.1 573.5,345.4 576.5,346.4 579.5,346.6 582.5,346.1 585.5,345.6 588.5,345.1 591.5,343.3 594.5,339.3 597.5,336.6 600.5,335.0 603.5,333.7 606.5,331.0 609.5,326.9 612.5,324.8 615.5,321.2 618.5,318.4 621.5,316.9 624.5,317.0 627.5,317.1 630.5,316.5 633.5,315.8 636.5,316.7 639.5,319.9 642.5,321.3 645.5,325.0 648.5,328.4 651.5,331.7 654.5,333.7 657.5,334.8 660.5,335.4 663.5,336.2 666.5,335.7 669.5,332.6 672.5,329.4 675.5,326.4 678.5,321.5 681.5,317.8 684.5,316.7 687.5,315.2 690.5,313.8 693.5,311.8 696.5,309.8 699.5,310.1 702.5,312.5 705.5,313.3 708.5,315.1 711.5,315.3 714.5,313.8 717.5,311.8 720.5,310.2 723.5,310.0 726.5,309.4 729.5,309.5 732.5,308.1 735.5,307.6 738.5,307.5 741.5,308.3 744.5,308.8 747.5,310.1 750.5,311.1 753.5,311.5 756.5,312.4 759.5,313.3 762.5,314.7 765.5,315.0 768.5,314.5 771.5,314.0 774.5,314.3 777.5,313.8 780.5,314.2 783.5,313.7 786.5,314.0 789.5,312.8 792.5,311.7 795.5,310.6 798.5,310.1 801.5,309.5 804.5,308.5 807.5,308.1 810.5,307.7 813.5,307.5 816.5,307.4 819.5,308.3 822.5,309.3 825.5,311.1 828.5,313.2 831.5,315.2 834.5,316.7 837.5,317.9 840.5,319.4 843.5,321.4 846.5,322.6 849.5,323.4 852.5,323.9 855.5,324.2 858.5,323.8 861.5,322.9 864.5,321.6 867.5,320.5 870.5,320.0 873.5,319.4 876.5,319.0 879.5,318.8 882.5,317.1 885.5,317.8 888.5,318.2 891.5,318.8 894.5,319.3 897.5,320.7 900.5,320.0 903.5,318.7 906.5,317.0 909.5,315.6 912.5,315.2 915.5,312.3 918.5,310.6 921.5,309.6 924.5,308.3 927.5,306.6 930.5,305.8 933.5,305.1 936.5,302.4 939.5,298.8 942.5,292.1 945.5,283.0 948.5,274.8 951.5,266.1 954.5,259.4 957.5,250.1 960.5,241.6 963.5,233.6 966.5,228.4 969.5,222.5 972.5,218.6 975.5,214.9 978.5,210.9 981.5,208.3 984.5,204.5 987.5,201.9 990.5,197.9 993.5,194.0 996.5,188.0 999.5,180.7 1002.5,176.3 1005.5,175.7 1008.5,173.9 1011.5,170.5 1014.5,168.3 1017.5,166.6 1020.5,165.5 1023.5,164.0 1026.5,165.3 1029.5,168.8 1032.5,171.3 1035.5,171.9 1038.5,173.0 1041.5,174.2 1044.5,174.9 1047.5,176.4 1050.5,177.7 1053.5,179.9 1056.5,181.6 1059.5,183.9 1062.5,185.7 1065.5,188.1 1068.5,189.4 1071.5,191.4 1074.5,192.8 1077.5,193.6 1080.5,194.3 1083.5,194.0 1086.5,193.6 1089.5,193.6 1092.5,194.1 1095.5,193.6 1098.5,194.0" fill="none" stroke="#ff00ff" stroke-width="1" />
<polyline points="90.5,321.8 93.5,320.4 96.5,318.8 99.5,314.5 102.5,310.4 105.5,309.2 108.5,310.0 111.5,315.6 114.5,325.9 117.5,334.3 120.5,344.4 123.5,352.9 126.5,356.5 129.5,355.7 132.5,357.5 135.5,354.7 138.5,349.1 141.5,345.7 144.5,343.7 147.5,341.9 150.5,340.1 153.5,340.0 156.5,338.6 159.5,338.2 162.5,335.5 165.5,333.1 168.5,331.3 171.5,330.8 174.5,330.7 177.5,330.9 180.5,331.7 183.5,331.8 186.5,330.3 189.5,328.4 192.5,327.2 195.5,325.8 198.5,324.2 201.5,322.3 204.5,322.6 207.5,323.2 210.5,323.2 213.5,324.2 216.5,325.4 219.5,324.0 222.5,322.6 225.5,321.6 228.5,320.0 231.5,320.0 234.5,321.4 237.5,321.9 240.5,323.0 243.5,324.5 246.5,325.8 249.5,325.3 252.5,326.9 255.5,327.0 258.5,327.0 261.5,326.1 264.5,325.2 267.5,322.3 270.5,321.2 273.5,318.9 276.5,316.0 279.5,315.0 282.5,315.4 285.5,315.9 288.5,318.2 291.5,321.8 294.5,322.7 297.5,323.1 300.5,323.5 303.5,320.6 306.5,315.8 309.5,314.5 312.5,313.8 315.5,314.7 318.5,321.0 321.5,327.4 324.5,331.1 327.5,332.2 330.5,329.1 333.5,320.9 336.5,315.0 339.5,309.1 342.5,303.9 345.5,303.3 348.5,305.9 351.5,308.1 354.5,313.5 357.5,324.4 360.5,331.1 363.5,333.5 366.5,336.7 369.5,337.7 372.5,336.7 375.5,335.6 378.5,339.0 381.5,340.4 384.5,341.1 387.5,341.3 390.5,345.1 393.5,349.6 396.5,351.6 399.5,357.4 402.5,360.6 405.5,361.0 408.5,359.6 411.5,359.1 414.5,357.2 417.5,357.7 420.5,356.8 423.5,356.3 426.5,359.0 429.5,361.2 432.5,360.4 435.5,361.1 438.5,360.3 441.5,359.7 444.5,356.9 447.5,356.4 450.5,352.9 453.5,353.0 456.5,353.5 459.5,354.3 462.5,356.5 465.5,361.2 468.5,362.6 471.5,363.3 474.5,364.2 477.5,363.5 480.5,363.1 483.5,363.3 486.5,362.2 489.5,360.3 492.5,356.8 495.5,353.2 498.5,349.5 501.5,345.7 504.5,342.9 507.5,341.5 510.5,340.2 513.5,338.8 516.5,336.4 519.5,335.6 522.5,334.0 525.5,334.0 528.5,335.4 531.5,338.3 534.5,339.6 537.5,341.0 540.5,341.5 543.5,341.3 546.5,340.7 549.5,341.0 552.5,340.8 555.5,341.4 558.5,341.8 561.5,343.0 564.5,344.9 567.5,348.0 570.5,348.8 573.5,349.1 576.5,349.9 579.5,348.3 582.5,344.1 585.5,342.3 588.5,341.0 591.5,336.7 594.5,330.2 597.5,329.0 600.5,327.6 603.5,326.4 606.5,325.4 609.5,323.5 612.5,320.6 615.5,314.8 618.5,310.4 621.5,308.5 624.5,310.5 627.5,313.5 630.5,318.1 633.5,321.2 636.5,324.9 639.5,329.4 642.5,329.1 645.5,331.8 648.5,335.6 651.5,338.5 654.5,337.9 657.5,340.4 660.5,339.0 663.5,336.8 666.5,332.9 669.5,327.2 672.5,318.3 675.5,313.8 678.5,306.3 681.5,302.7 684.5,306.3 687.5,312.2 690.5,313.8 693.5,317.3 696.5,316.9 699.5,313.9 702.5,312.9 705.5,312.8 708.5,312.9 711.5,313.7 714.5,313.6 717.5,310.7 720.5,307.6 723.5,307.0 726.5,305.2 729.5,305.4 732.5,305.5 735.5,307.6 738.5,308.1 741.5,311.4 744.5,312.2 747.5,314.8 750.5,314.5 753.5,314.9 756.5,313.3 759.5,314.4 762.5,314.6 765.5,315.5 768.5,314.2 771.5,314.8 774.5,314.2 777.5,313.1 780.5,312.8 783.5,313.2 786.5,313.2 789.5,311.3 792.5,310.3 795.5,308.4 798.5,307.1 801.5,305.7 804.5,305.8 807.5,305.9 810.5,307.0 813.5,308.0 816.5,309.1 819.5,310.7 822.5,312.7 825.5,315.1 828.5,318.5 831.5,321.2 834.5,322.6 837.5,323.0 840.5,323.7 843.5,324.3 846.5,324.1 849.5,324.2 852.5,324.8 855.5,324.8 858.5,323.3 861.5,321.8 864.5,319.1 867.5,316.2 870.5,315.2 873.5,315.5 876.5,316.2 879.5,318.5 882.5,317.9 885.5,320.3 888.5,321.0 891.5,321.5 894.5,320.0 897.5,323.4 900.5,319.7 903.5,316.5 906.5,312.6 909.5,311.1 912.5,307.0 915.5,305.0 918.5,304.7 921.5,306.6 924.5,305.4 927.5,306.3 930.5,306.7 933.5,305.6 936.5,298.2 939.5,292.3 942.5,278.0 945.5,259.3 948.5,244.1 951.5,234.0 954.5,226.5 957.5,222.1 960.5,223.8 963.5,223.1 966.5,222.9 969.5,218.5 972.5,215.1 975.5,206.0 978.5,198.8 981.5,193.7 984.5,190.5 987.5,188.7 990.5,189.7 993.5,189.3 996.5,182.2 999.5,170.9 1002.5,163.9 1005.5,161.8 1008.5,158.6 1011.5,158.8 1014.5,165.6 1017.5,169.4 1020.5,169.2 1023.5,169.5 1026.5,171.8 1029.5,172.1 1032.5,173.2 1035.5,174.6 1038.5,176.4 1041.5,176.6 1044.5,177.8 1047.5,179.6 1050.5,180.8 1053.5,183.4 1056.5,186.6 1059.5,190.0 1062.5,191.8 1065.5,195.5 1068.5,195.4 1071.5,196.1 1074.5,195.6 1077.5,195.5 1080.5,193.0 1083.5,192.6 1086.5,191.1 1089.5,191.6 1092.5,192.6 1095.5,194.2 1098.5,195.4" fill="none" stroke="#ffff00" stroke-width="1" />
<line x1="89.0" y1="497.5" x2="1101.0" y2="497.5" stroke="#ff3c3c" stroke-width="1" stroke-dasharray="3 2"/>
<path d="M90.5 497.6V484.4M93.5 497.6V485.0M96.5 497.6V483.8M99.5 497.6V477.6M102.5 497.6V476.4M105.5 497.6V481.7M108.5 497.6V492.6M153.5 497.6V495.4M156.5 497.6V493.2M159.5 497.6V491.3M162.5 497.6V488.2M165.5 497.6V485.3M168.5 497.6V485.1M171.5 497.6V487.8M174.5 497.6V490.6M177.5 497.6V491.0M180.5 497.6V491.8M183.5 497.6V491.9M186.5 497.6V491.1M189.5 497.6V490.7M192.5 497.6V490.5M195.5 497.6V490.8M198.5 497.6V490.1M201.5 497.6V488.5M204.5 497.6V492.5M207.5 497.6V495.8M210.5 497.6V496.8M225.5 497.6V496.4M228.5 497.6V496.0M267.5 497.6V496.0M270.5 497.6V495.6M273.5 497.6V492.9M276.5 497.6V489.7M279.5 497.6V490.4M282.5 497.6V492.9M285.5 497.6V496.8M306.5 497.6V491.0M309.5 497.6V491.4M312.5 497.6V493.8M333.5 497.6V490.1M336.5 497.6V485.9M339.5 497.6V481.8M342.5 497.6V477.8M345.5 497.6V482.8M348.5 497.6V488.9M351.5 497.6V494.4M420.5 497.6V495.3M423.5 497.6V492.9M426.5 497.6V493.6M429.5 497.6V496.3M432.5 497.6V494.7M435.5 497.6V492.2M438.5 497.6V487.4M441.5 497.6V487.4M444.5 497.6V485.2M447.5 497.6V486.3M450.5 497.6V479.1M453.5 497.6V480.7M456.5 497.6V485.9M459.5 497.6V487.9M462.5 497.6V494.7M465.5 497.6V496.5M468.5 497.6V495.6M471.5 497.6V496.8M474.5 497.6V496.3M480.5 497.6V496.1M483.5 497.6V494.7M486.5 497.6V493.0M489.5 497.6V488.8M492.5 497.6V484.5M495.5 497.6V480.3M498.5 497.6V477.7M501.5 497.6V476.1M504.5 497.6V475.4M507.5 497.6V477.3M510.5 497.6V477.8M513.5 497.6V478.5M516.5 497.6V476.8M519.5 497.6V479.8M522.5 497.6V482.1M525.5 497.6V486.5M528.5 497.6V492.6M531.5 497.6V496.8M585.5 497.6V494.5M588.5 497.6V493.4M591.5 497.6V488.1M594.5 497.6V478.3M597.5 497.6V480.5M600.5 497.6V484.0M603.5 497.6V488.0M606.5 497.6V486.8M609.5 497.6V477.9M612.5 497.6V478.2M615.5 497.6V474.6M618.5 497.6V477.8M621.5 497.6V482.4M624.5 497.6V486.5M669.5 497.6V488.6M672.5 497.6V476.2M675.5 497.6V475.8M678.5 497.6V471.1M681.5 497.6V475.1M684.5 497.6V485.5M687.5 497.6V493.9M690.5 497.6V496.1M693.5 497.6V496.4M696.5 497.6V493.4M699.5 497.6V492.7M717.5 497.6V495.7M720.5 497.6V493.0M723.5 497.6V496.3M726.5 497.6V494.1M729.5 497.6V496.5M789.5 497.6V494.9M792.5 497.6V494.6M795.5 497.6V492.5M798.5 497.6V491.1M801.5 497.6V491.7M804.5 497.6V492.5M807.5 497.6V494.9M861.5 497.6V495.0M864.5 497.6V488.4M867.5 497.6V485.5M870.5 497.6V489.1M873.5 497.6V492.6M876.5 497.6V493.6M879.5 497.6V494.3M882.5 497.6V489.1M894.5 497.6V494.9M900.5 497.6V493.9M903.5 497.6V490.2M906.5 497.6V485.0M909.5 497.6V483.5M912.5 497.6V482.4M915.5 497.6V482.8M918.5 497.6V486.1M921.5 497.6V490.6M924.5 497.6V487.9M927.5 497.6V490.6M930.5 497.6V492.1M933.5 497.6V492.3M936.5 497.6V480.5M939.5 497.6V471.4M942.5 497.6V452.3M945.5 497.6V432.3M948.5 497.6V430.5M951.5 497.6V432.6M954.5 497.6V441.3M957.5 497.6V442.6M960.5 497.6V450.4M963.5 497.6V460.2M966.5 497.6V469.8M969.5 497.6V472.5M972.5 497.6V470.7M975.5 497.6V462.9M978.5 497.6V466.7M981.5 497.6V477.5M984.5 497.6V485.0M987.5 497.6V489.1M990.5 497.6V490.4M993.5 497.6V495.4M996.5 497.6V490.7M999.5 497.6V478.4M1002.5 497.6V480.1M1005.5 497.6V491.5" stroke="#ff5050" fill="none"/>
<path d="M111.5 497.6V508.2M114.5 497.6V522.2M117.5 497.6V526.9M120.5 497.6V537.1M123.5 497.6V544.2M126.5 497.6V543.4M129.5 497.6V535.1M132.5 497.6V530.3M135.5 497.6V523.6M138.5 497.6V514.0M141.5 497.6V509.1M144.5 497.6V502.6M147.5 497.6V501.2M213.5 497.6V498.7M216.5 497.6V498.4M234.5 497.6V501.6M237.5 497.6V502.0M240.5 497.6V502.9M243.5 497.6V504.0M246.5 497.6V506.2M249.5 497.6V505.0M252.5 497.6V506.9M255.5 497.6V505.3M258.5 497.6V504.2M261.5 497.6V502.9M264.5 497.6V499.6M288.5 497.6V501.0M291.5 497.6V504.4M294.5 497.6V502.7M297.5 497.6V501.7M300.5 497.6V502.9M315.5 497.6V501.1M318.5 497.6V512.2M321.5 497.6V514.9M324.5 497.6V514.0M327.5 497.6V508.6M330.5 497.6V500.2M354.5 497.6V503.3M357.5 497.6V518.7M360.5 497.6V524.4M363.5 497.6V518.9M366.5 497.6V517.3M369.5 497.6V515.1M372.5 497.6V518.4M375.5 497.6V516.1M378.5 497.6V515.8M381.5 497.6V512.8M384.5 497.6V508.5M387.5 497.6V509.3M390.5 497.6V513.8M393.5 497.6V519.4M396.5 497.6V514.1M399.5 497.6V516.6M402.5 497.6V515.3M405.5 497.6V511.7M408.5 497.6V507.7M411.5 497.6V499.3M417.5 497.6V499.3M534.5 497.6V499.2M537.5 497.6V500.4M540.5 497.6V501.2M543.5 497.6V502.7M546.5 497.6V502.4M549.5 497.6V503.8M552.5 497.6V503.0M555.5 497.6V504.0M558.5 497.6V504.9M561.5 497.6V506.1M564.5 497.6V509.6M567.5 497.6V512.6M570.5 497.6V509.9M573.5 497.6V507.1M576.5 497.6V506.8M579.5 497.6V503.9M630.5 497.6V502.6M633.5 497.6V506.7M636.5 497.6V511.8M639.5 497.6V516.5M642.5 497.6V515.0M645.5 497.6V518.5M648.5 497.6V522.8M651.5 497.6V524.8M654.5 497.6V518.9M657.5 497.6V517.5M660.5 497.6V511.5M663.5 497.6V508.4M666.5 497.6V502.4M702.5 497.6V498.3M705.5 497.6V500.6M708.5 497.6V501.2M711.5 497.6V499.5M735.5 497.6V500.9M738.5 497.6V503.9M741.5 497.6V507.6M744.5 497.6V507.2M747.5 497.6V509.7M750.5 497.6V507.1M753.5 497.6V507.1M756.5 497.6V504.4M759.5 497.6V506.2M762.5 497.6V507.7M765.5 497.6V506.4M768.5 497.6V502.0M771.5 497.6V500.9M774.5 497.6V501.3M777.5 497.6V500.9M780.5 497.6V500.5M783.5 497.6V498.5M816.5 497.6V499.6M819.5 497.6V501.9M822.5 497.6V505.7M825.5 497.6V508.9M828.5 497.6V511.8M831.5 497.6V512.9M834.5 497.6V510.8M837.5 497.6V509.0M840.5 497.6V509.0M843.5 497.6V509.6M846.5 497.6V507.2M849.5 497.6V503.9M852.5 497.6V502.8M855.5 497.6V502.0M858.5 497.6V499.1M888.5 497.6V500.1M891.5 497.6V499.7M1008.5 497.6V500.6M1011.5 497.6V505.9M1014.5 497.6V514.0M1017.5 497.6V519.9M1020.5 497.6V522.8M1023.5 497.6V525.8M1026.5 497.6V530.3M1029.5 497.6V531.6M1032.5 497.6V534.0M1035.5 497.6V534.2M1038.5 497.6V535.5M1041.5 497.6V534.4M1044.5 497.6V533.8M1047.5 497.6V535.8M1050.5 497.6V533.8M1053.5 497.6V536.8M1056.5 497.6V537.4M1059.5 497.6V537.6M1062.5 497.6V536.0M1065.5 497.6V535.6M1068.5 497.6V530.5M1071.5 497.6V527.6M1074.5 497.6V523.0M1077.5 497.6V519.8M1080.5 497.6V513.6M1083.5 497.6V510.3M1086.5 497.6V506.9M1089.5 497.6V507.4M1092.5 497.6V509.2M1095.5 497.6V507.8M1098.5 497.6V506.8" stroke="#00e600" fill="none"/>
<polyline points="90.5,470.8 93.5,469.3 96.5,467.5 99.5,465.1 102.5,462.4 105.5,460.4 108.5,459.8 111.5,461.1 114.5,464.2 117.5,467.8 120.5,472.8 123.5,478.6 126.5,484.3 129.5,489.0 132.5,493.1 135.5,496.3 138.5,498.4 141.5,499.8 144.5,500.4 147.5,500.9 150.5,500.9 153.5,500.6 156.5,500.1 159.5,499.3 162.5,498.1 165.5,496.6 168.5,495.0 171.5,493.8 174.5,492.9 177.5,492.1 180.5,491.4 183.5,490.7 186.5,489.9 189.5,489.0 192.5,488.1 195.5,487.3 198.5,486.3 201.5,485.2 204.5,484.5 207.5,484.3 210.5,484.2 213.5,484.4 216.5,484.5 219.5,484.4 222.5,484.3 225.5,484.2 228.5,484.0 231.5,484.1 234.5,484.6 237.5,485.1 240.5,485.8 243.5,486.6 246.5,487.6 249.5,488.6 252.5,489.7 255.5,490.7 258.5,491.5 261.5,492.2 264.5,492.5 267.5,492.2 270.5,492.0 273.5,491.4 276.5,490.4 279.5,489.5 282.5,488.9 285.5,488.8 288.5,489.3 291.5,490.1 294.5,490.7 297.5,491.3 300.5,491.9 303.5,491.9 306.5,491.1 309.5,490.3 312.5,489.9 315.5,490.3 318.5,492.1 321.5,494.3 324.5,496.3 327.5,497.7 330.5,498.0 333.5,497.1 336.5,495.6 339.5,493.7 342.5,491.2 345.5,489.3 348.5,488.2 351.5,487.9 354.5,488.6 357.5,491.2 360.5,494.6 363.5,497.2 366.5,499.7 369.5,501.9 372.5,504.5 375.5,506.8 378.5,509.0 381.5,510.9 384.5,512.3 387.5,513.8 390.5,515.8 393.5,518.5 396.5,520.6 399.5,523.0 402.5,525.2 405.5,526.9 408.5,528.2 411.5,528.4 414.5,528.3 417.5,528.5 420.5,528.3 423.5,527.7 426.5,527.2 429.5,527.0 432.5,526.6 435.5,526.0 438.5,524.7 441.5,523.4 444.5,521.9 447.5,520.5 450.5,518.1 453.5,516.0 456.5,514.6 459.5,513.4 462.5,513.0 465.5,512.9 468.5,512.6 471.5,512.5 474.5,512.3 477.5,512.3 480.5,512.1 483.5,511.8 486.5,511.2 489.5,510.1 492.5,508.4 495.5,506.3 498.5,503.8 501.5,501.1 504.5,498.3 507.5,495.8 510.5,493.3 513.5,490.9 516.5,488.3 519.5,486.1 522.5,484.2 525.5,482.8 528.5,482.2 531.5,482.1 534.5,482.3 537.5,482.6 540.5,483.1 543.5,483.7 546.5,484.3 549.5,485.1 552.5,485.8 555.5,486.6 558.5,487.5 561.5,488.5 564.5,490.0 567.5,491.9 570.5,493.5 573.5,494.6 576.5,495.8 579.5,496.6 582.5,496.5 585.5,496.1 588.5,495.6 591.5,494.4 594.5,492.0 597.5,489.9 600.5,488.2 603.5,487.0 606.5,485.6 609.5,483.1 612.5,480.7 615.5,477.8 618.5,475.4 621.5,473.5 624.5,472.1 627.5,472.0 630.5,472.7 633.5,473.8 636.5,475.6 639.5,477.9 642.5,480.1 645.5,482.7 648.5,485.9 651.5,489.3 654.5,491.9 657.5,494.4 660.5,496.1 663.5,497.5 666.5,498.1 669.5,497.0 672.5,494.3 675.5,491.6 678.5,488.2 681.5,485.4 684.5,483.9 687.5,483.5 690.5,483.3 693.5,483.1 696.5,482.6 699.5,482.0 702.5,482.1 705.5,482.4 708.5,482.9 711.5,483.1 714.5,483.1 717.5,482.9 720.5,482.3 723.5,482.2 726.5,481.7 729.5,481.6 732.5,481.6 735.5,482.0 738.5,482.8 741.5,484.0 744.5,485.2 747.5,486.7 750.5,487.9 753.5,489.1 756.5,489.9 759.5,491.0 762.5,492.3 765.5,493.4 768.5,493.9 771.5,494.4 774.5,494.8 777.5,495.2 780.5,495.6 783.5,495.7 786.5,495.8 789.5,495.5 792.5,495.1 795.5,494.5 798.5,493.6 801.5,492.9 804.5,492.3 807.5,491.9 810.5,491.9 813.5,491.9 816.5,492.1 819.5,492.7 822.5,493.7 825.5,495.1 828.5,496.9 831.5,498.8 834.5,500.4 837.5,501.9 840.5,503.3 843.5,504.8 846.5,506.0 849.5,506.8 852.5,507.4 855.5,508.0 858.5,508.2 861.5,507.8 864.5,506.7 867.5,505.2 870.5,504.1 873.5,503.5 876.5,503.0 879.5,502.6 882.5,501.5 885.5,501.5 888.5,501.8 891.5,502.1 894.5,501.8 897.5,501.7 900.5,501.2 903.5,500.3 906.5,498.7 909.5,497.0 912.5,495.1 915.5,493.2 918.5,491.8 921.5,490.9 924.5,489.7 927.5,488.8 930.5,488.1 933.5,487.5 936.5,485.3 939.5,482.0 942.5,476.4 945.5,468.2 948.5,459.8 951.5,451.7 954.5,444.7 957.5,437.8 960.5,431.9 963.5,427.2 966.5,423.7 969.5,420.6 972.5,417.2 975.5,412.9 978.5,409.0 981.5,406.5 984.5,404.9 987.5,403.9 990.5,403.0 993.5,402.7 996.5,401.8 999.5,399.4 1002.5,397.3 1005.5,396.5 1008.5,396.9 1011.5,397.9 1014.5,400.0 1017.5,402.8 1020.5,405.9 1023.5,409.4 1026.5,413.5 1029.5,417.8 1032.5,422.3 1035.5,426.9 1038.5,431.6 1041.5,436.2 1044.5,440.7 1047.5,445.5 1050.5,450.0 1053.5,454.9 1056.5,459.9 1059.5,464.9 1062.5,469.7 1065.5,474.5 1068.5,478.6 1071.5,482.3 1074.5,485.5 1077.5,488.3 1080.5,490.3 1083.5,491.9 1086.5,493.0 1089.5,494.3 1092.5,495.7 1095.5,497.0 1098.5,498.1" fill="none" stroke="#ffffff" stroke-width="1" />
<polyline points="90.5,464.3 93.5,463.0 96.5,460.7 99.5,455.1 102.5,451.8 105.5,452.4 108.5,457.3 111.5,466.4 114.5,476.5 117.5,482.5 120.5,492.5 123.5,501.9 126.5,507.2 129.5,507.7 132.5,509.4 135.5,509.3 138.5,506.6 141.5,505.6 144.5,502.9 147.5,502.7 150.5,501.0 153.5,499.5 156.5,497.9 159.5,496.2 162.5,493.4 165.5,490.5 168.5,488.8 171.5,488.9 174.5,489.5 177.5,488.8 180.5,488.5 183.5,487.8 186.5,486.6 189.5,485.5 192.5,484.6 195.5,483.8 198.5,482.5 201.5,480.6 204.5,482.0 207.5,483.4 210.5,483.8 213.5,484.9 216.5,484.9 219.5,484.2 222.5,484.0 225.5,483.6 228.5,483.2 231.5,484.4 234.5,486.5 237.5,487.3 240.5,488.4 243.5,489.8 246.5,491.9 249.5,492.3 252.5,494.4 255.5,494.6 258.5,494.9 261.5,494.8 264.5,493.5 267.5,491.4 270.5,491.0 273.5,489.0 276.5,486.4 279.5,485.9 282.5,486.6 285.5,488.4 288.5,491.0 291.5,493.5 294.5,493.3 297.5,493.3 300.5,494.6 303.5,492.0 306.5,487.8 309.5,487.2 312.5,488.0 315.5,492.1 318.5,499.4 321.5,503.0 324.5,504.5 327.5,503.2 330.5,499.4 333.5,493.3 336.5,489.8 339.5,485.7 342.5,481.3 345.5,481.9 348.5,483.9 351.5,486.3 354.5,491.4 357.5,501.8 360.5,507.9 363.5,507.9 366.5,509.5 369.5,510.6 372.5,514.9 375.5,516.0 378.5,518.1 381.5,518.6 384.5,517.8 387.5,519.6 390.5,523.9 393.5,529.4 396.5,528.8 399.5,532.5 402.5,534.0 405.5,534.0 408.5,533.2 411.5,529.2 414.5,528.1 417.5,529.4 420.5,527.1 423.5,525.3 426.5,525.2 429.5,526.4 432.5,525.2 435.5,523.2 438.5,519.6 441.5,518.3 444.5,515.7 447.5,514.8 450.5,508.9 453.5,507.6 456.5,508.7 459.5,508.5 462.5,511.5 465.5,512.3 468.5,511.6 471.5,512.1 474.5,511.7 477.5,512.2 480.5,511.4 483.5,510.3 486.5,508.9 489.5,505.7 492.5,501.9 495.5,497.6 498.5,493.9 501.5,490.4 504.5,487.2 507.5,485.7 510.5,483.4 513.5,481.4 516.5,477.9 519.5,477.2 522.5,476.4 525.5,477.2 528.5,479.7 531.5,481.7 534.5,483.1 537.5,484.0 540.5,484.9 543.5,486.3 546.5,486.7 549.5,488.2 552.5,488.5 555.5,489.8 558.5,491.1 561.5,492.8 564.5,496.0 567.5,499.4 570.5,499.6 573.5,499.4 576.5,500.4 579.5,499.7 582.5,496.2 585.5,494.5 588.5,493.5 591.5,489.7 594.5,482.3 597.5,481.3 600.5,481.3 603.5,482.2 606.5,480.2 609.5,473.3 612.5,471.0 615.5,466.3 618.5,465.5 621.5,465.9 624.5,466.5 627.5,471.8 630.5,475.2 633.5,478.3 636.5,482.6 639.5,487.4 642.5,488.8 645.5,493.1 648.5,498.4 651.5,502.8 654.5,502.6 657.5,504.3 660.5,503.1 663.5,502.9 666.5,500.5 669.5,492.5 672.5,483.6 675.5,480.6 678.5,475.0 681.5,474.2 684.5,477.8 687.5,481.6 690.5,482.5 693.5,482.5 696.5,480.5 699.5,479.5 702.5,482.4 705.5,484.0 708.5,484.7 711.5,484.1 714.5,483.1 717.5,481.9 720.5,480.0 723.5,481.5 726.5,480.0 729.5,481.0 732.5,481.4 735.5,483.6 738.5,485.9 741.5,489.0 744.5,490.0 747.5,492.8 750.5,492.7 753.5,493.8 756.5,493.3 759.5,495.3 762.5,497.3 765.5,497.8 768.5,496.1 771.5,496.0 774.5,496.7 777.5,496.9 780.5,497.1 783.5,496.2 786.5,496.1 789.5,494.1 792.5,493.6 795.5,491.9 798.5,490.4 801.5,490.0 804.5,489.7 807.5,490.6 810.5,491.7 813.5,491.9 816.5,493.2 819.5,494.9 822.5,497.8 825.5,500.8 828.5,504.0 831.5,506.4 834.5,507.0 837.5,507.6 840.5,509.0 843.5,510.8 846.5,510.8 849.5,509.9 852.5,510.0 855.5,510.2 858.5,508.9 861.5,506.5 864.5,502.1 867.5,499.2 870.5,499.9 873.5,501.0 876.5,501.0 879.5,500.9 882.5,497.2 885.5,501.6 888.5,503.1 891.5,503.2 894.5,500.4 897.5,501.4 900.5,499.4 903.5,496.6 906.5,492.4 909.5,489.9 912.5,487.5 915.5,485.8 918.5,486.0 921.5,487.4 924.5,484.8 927.5,485.3 930.5,485.4 933.5,484.8 936.5,476.7 939.5,468.9 942.5,453.7 945.5,435.5 948.5,426.3 951.5,419.2 954.5,416.5 957.5,410.3 960.5,408.3 963.5,408.5 966.5,409.8 969.5,408.0 972.5,403.8 975.5,395.5 978.5,393.6 981.5,396.4 984.5,398.6 987.5,399.6 990.5,399.4 993.5,401.6 996.5,398.4 999.5,389.9 1002.5,388.5 1005.5,393.5 1008.5,398.4 1011.5,402.1 1014.5,408.2 1017.5,413.9 1020.5,418.5 1023.5,423.5 1026.5,429.8 1029.5,434.8 1032.5,440.5 1035.5,445.2 1038.5,450.6 1041.5,454.6 1044.5,458.8 1047.5,464.6 1050.5,468.1 1053.5,474.6 1056.5,479.8 1059.5,484.9 1062.5,488.9 1065.5,493.5 1068.5,495.1 1071.5,497.3 1074.5,498.2 1077.5,499.4 1080.5,498.3 1083.5,498.2 1086.5,497.7 1089.5,499.1 1092.5,501.5 1095.5,502.1 1098.5,502.7" fill="none" stroke="#ffff00" stroke-width="1" />
<path d="M90.5 630.5V617.0M93.5 630.5V615.7M96.5 630.5V614.5M99.5 630.5V613.2M102.5 630.5V612.4M105.5 630.5V611.6M108.5 630.5V610.9M111.5 630.5V610.1M114.5 630.5V610.2M117.5 630.5V610.4M120.5 630.5V610.7M123.5 630.5V610.9M126.5 630.5V611.3M129.5 630.5V611.8M132.5 630.5V612.3M135.5 630.5V612.8M138.5 630.5V613.5M141.5 630.5V614.2M144.5 630.5V614.9M147.5 630.5V615.5M150.5 630.5V616.2M153.5 630.5V616.9M156.5 630.5V617.6M159.5 630.5V618.3M162.5 630.5V618.7M165.5 630.5V619.0M168.5 630.5V619.3M171.5 630.5V619.6M174.5 630.5V620.7M177.5 630.5V621.9M180.5 630.5V623.0M183.5 630.5V624.2M186.5 630.5V625.8M189.5 630.5V627.6M213.5 630.5V628.3M216.5 630.5V627.8M219.5 630.5V627.3M222.5 630.5V626.9M225.5 630.5V626.4M228.5 630.5V625.9M231.5 630.5V625.4M234.5 630.5V625.0M237.5 630.5V624.9M240.5 630.5V624.7M243.5 630.5V624.6M246.5 630.5V624.5M249.5 630.5V624.4M252.5 630.5V624.3M255.5 630.5V624.1M258.5 630.5V624.0M261.5 630.5V623.7M264.5 630.5V623.3M267.5 630.5V622.9M270.5 630.5V622.5M273.5 630.5V622.1M276.5 630.5V621.6M279.5 630.5V621.2M282.5 630.5V620.7M285.5 630.5V620.2M288.5 630.5V619.8M291.5 630.5V620.1M294.5 630.5V620.5M297.5 630.5V620.9M300.5 630.5V621.4M303.5 630.5V621.8M306.5 630.5V622.2M309.5 630.5V622.7M312.5 630.5V623.3M315.5 630.5V623.9M318.5 630.5V624.4M321.5 630.5V625.0M324.5 630.5V625.7M327.5 630.5V626.3M330.5 630.5V626.4M333.5 630.5V626.1M336.5 630.5V625.7M339.5 630.5V625.4M342.5 630.5V625.0M345.5 630.5V624.7M348.5 630.5V624.7M351.5 630.5V624.8M354.5 630.5V624.9M357.5 630.5V625.0M360.5 630.5V625.6M363.5 630.5V626.9M366.5 630.5V628.1M369.5 630.5V628.9M372.5 630.5V629.6M540.5 630.5V629.3M543.5 630.5V628.2M546.5 630.5V627.0M549.5 630.5V625.9M552.5 630.5V625.1M555.5 630.5V624.3M558.5 630.5V623.5M561.5 630.5V622.7M564.5 630.5V621.9M567.5 630.5V621.5M570.5 630.5V621.1M573.5 630.5V620.7M576.5 630.5V620.3M579.5 630.5V620.2M582.5 630.5V620.2M585.5 630.5V620.2M588.5 630.5V620.2M591.5 630.5V620.2M594.5 630.5V620.2M597.5 630.5V620.2M600.5 630.5V620.4M603.5 630.5V620.7M606.5 630.5V621.0M609.5 630.5V621.2M612.5 630.5V621.6M615.5 630.5V621.5M618.5 630.5V621.1M621.5 630.5V620.7M624.5 630.5V620.3M627.5 630.5V619.9M630.5 630.5V619.8M633.5 630.5V620.0M636.5 630.5V620.2M639.5 630.5V620.4M642.5 630.5V620.6M645.5 630.5V620.8M648.5 630.5V621.0M651.5 630.5V621.3M654.5 630.5V621.7M657.5 630.5V622.1M660.5 630.5V622.5M663.5 630.5V622.2M666.5 630.5V621.6M669.5 630.5V620.9M672.5 630.5V620.3M675.5 630.5V619.7M678.5 630.5V619.1M681.5 630.5V619.1M684.5 630.5V619.2M687.5 630.5V619.3M690.5 630.5V619.4M693.5 630.5V619.5M696.5 630.5V619.6M699.5 630.5V619.8M702.5 630.5V620.6M705.5 630.5V621.3M708.5 630.5V622.1M711.5 630.5V622.9M714.5 630.5V623.6M717.5 630.5V623.9M720.5 630.5V623.6M723.5 630.5V623.3M726.5 630.5V623.0M729.5 630.5V622.7M732.5 630.5V622.4M735.5 630.5V621.9M738.5 630.5V621.4M741.5 630.5V620.9M744.5 630.5V620.4M747.5 630.5V619.9M750.5 630.5V620.0M753.5 630.5V620.4M756.5 630.5V620.8M759.5 630.5V621.2M762.5 630.5V621.6M765.5 630.5V621.9M768.5 630.5V622.2M771.5 630.5V622.6M774.5 630.5V622.9M777.5 630.5V623.2M780.5 630.5V623.6M783.5 630.5V623.9M786.5 630.5V624.2M789.5 630.5V624.5M792.5 630.5V624.3M795.5 630.5V624.0M798.5 630.5V623.6M801.5 630.5V623.2M804.5 630.5V622.9M807.5 630.5V622.7M810.5 630.5V623.4M813.5 630.5V624.0M816.5 630.5V624.7M819.5 630.5V625.4M822.5 630.5V626.0M825.5 630.5V626.9M828.5 630.5V627.8M831.5 630.5V628.7M834.5 630.5V629.5M936.5 630.5V629.6M939.5 630.5V627.6M942.5 630.5V625.5M945.5 630.5V623.4M948.5 630.5V621.3M951.5 630.5V619.5M954.5 630.5V617.8M957.5 630.5V616.0M960.5 630.5V614.3M963.5 630.5V612.5M966.5 630.5V610.0M969.5 630.5V607.3M972.5 630.5V604.6M975.5 630.5V602.0M978.5 630.5V599.5M981.5 630.5V597.0M984.5 630.5V594.6M987.5 630.5V592.2M990.5 630.5V589.6M993.5 630.5V586.9M996.5 630.5V584.2M999.5 630.5V581.5M1002.5 630.5V578.9M1005.5 630.5V576.6M1008.5 630.5V574.2M1011.5 630.5V571.9M1014.5 630.5V569.6M1017.5 630.5V567.9M1020.5 630.5V566.3M1023.5 630.5V564.6M1026.5 630.5V564.3M1029.5 630.5V564.1M1032.5 630.5V564.0M1035.5 630.5V564.4M1038.5 630.5V565.3M1041.5 630.5V566.2M1044.5 630.5V567.3M1047.5 630.5V568.6M1050.5 630.5V569.9M1053.5 630.5V571.3M1056.5 630.5V572.6M1059.5 630.5V574.3M1062.5 630.5V577.1M1065.5 630.5V579.8M1068.5 630.5V582.5M1071.5 630.5V585.2M1074.5 630.5V587.9M1077.5 630.5V590.6M1080.5 630.5V593.2M1083.5 630.5V595.9M1086.5 630.5V598.5M1089.5 630.5V601.2M1092.5 630.5V603.8M1095.5 630.5V606.9M1098.5 630.5V610.2" stroke="#ff4646" fill="none"/>
<path d="M195.5 631.0V632.0M198.5 631.0V632.0M201.5 631.0V632.0M204.5 631.0V632.0M207.5 631.0V632.0M387.5 631.0V632.0M390.5 630.5V631.9M393.5 630.5V632.6M396.5 630.5V633.6M399.5 630.5V634.6M402.5 630.5V635.6M405.5 630.5V636.6M408.5 630.5V637.6M411.5 630.5V638.4M414.5 630.5V639.2M417.5 630.5V640.0M420.5 630.5V640.8M423.5 630.5V641.6M426.5 630.5V642.7M429.5 630.5V643.8M432.5 630.5V644.9M435.5 630.5V646.0M438.5 630.5V647.1M441.5 630.5V648.2M444.5 630.5V649.3M447.5 630.5V649.5M450.5 630.5V649.5M453.5 630.5V649.5M456.5 630.5V649.5M459.5 630.5V649.5M462.5 630.5V649.5M465.5 630.5V649.5M468.5 630.5V649.5M471.5 630.5V649.5M474.5 630.5V649.5M477.5 630.5V649.1M480.5 630.5V648.5M483.5 630.5V648.0M486.5 630.5V647.5M489.5 630.5V646.9M492.5 630.5V646.4M495.5 630.5V645.5M498.5 630.5V644.5M501.5 630.5V643.6M504.5 630.5V642.8M507.5 630.5V641.8M510.5 630.5V640.3M513.5 630.5V638.8M516.5 630.5V637.3M519.5 630.5V635.8M522.5 630.5V634.3M525.5 630.5V632.7M528.5 631.0V632.0M843.5 631.0V632.0M846.5 631.0V632.0M849.5 631.0V632.0M852.5 631.0V632.0M855.5 631.0V632.0M858.5 631.0V632.0M861.5 631.0V632.0M864.5 631.0V632.0M867.5 631.0V632.0M870.5 631.0V632.0M873.5 630.5V632.2M876.5 630.5V632.8M879.5 630.5V633.4M882.5 630.5V633.9M885.5 630.5V634.5M888.5 630.5V635.1M891.5 630.5V635.7M894.5 630.5V635.8M897.5 630.5V635.8M900.5 630.5V635.8M903.5 630.5V635.8M906.5 630.5V635.8M909.5 630.5V635.8M912.5 630.5V635.7M915.5 630.5V634.8M918.5 630.5V633.9M921.5 630.5V633.0M924.5 630.5V632.1M927.5 631.0V632.0M930.5 631.0V632.0" stroke="#00e600" fill="none"/>
<polyline points="89.0,630.5 90.5,630.5 93.5,630.5 96.5,630.5 99.5,630.5 102.5,630.5 105.5,630.5 108.5,630.5 111.5,630.5 114.5,630.5 117.5,630.5 120.5,684.0 123.5,630.5 126.5,577.0 129.5,630.5 132.5,630.5 135.5,630.5 138.5,630.5 141.5,630.5 144.5,630.5 147.5,630.5 150.5,630.5 153.5,630.5 156.5,630.5 159.5,630.5 162.5,630.5 165.5,630.5 168.5,630.5 171.5,630.5 174.5,630.5 177.5,630.5 180.5,630.5 183.5,630.5 186.5,630.5 189.5,630.5 192.5,630.5 195.5,630.5 198.5,630.5 201.5,630.5 204.5,630.5 207.5,630.5 210.5,630.5 213.5,630.5 216.5,630.5 219.5,630.5 222.5,630.5 225.5,630.5 228.5,630.5 231.5,630.5 234.5,630.5 237.5,630.5 240.5,630.5 243.5,630.5 246.5,630.5 249.5,630.5 252.5,630.5 255.5,630.5 258.5,630.5 261.5,684.0 264.5,630.5 267.5,630.5 270.5,630.5 273.5,630.5 276.5,630.5 279.5,684.0 282.5,630.5 285.5,630.5 288.5,577.0 291.5,630.5 294.5,630.5 297.5,630.5 300.5,630.5 303.5,630.5 306.5,630.5 309.5,630.5 312.5,630.5 315.5,630.5 318.5,684.0 321.5,577.0 324.5,630.5 327.5,630.5 330.5,630.5 333.5,630.5 336.5,630.5 339.5,630.5 342.5,630.5 345.5,630.5 348.5,630.5 351.5,630.5 354.5,630.5 357.5,684.0 360.5,630.5 363.5,577.0 366.5,684.0 369.5,630.5 372.5,630.5 375.5,630.5 378.5,630.5 381.5,630.5 384.5,630.5 387.5,630.5 390.5,630.5 393.5,630.5 396.5,630.5 399.5,630.5 402.5,630.5 405.5,630.5 408.5,630.5 411.5,630.5 414.5,630.5 417.5,630.5 420.5,630.5 423.5,630.5 426.5,630.5 429.5,630.5 432.5,630.5 435.5,630.5 438.5,630.5 441.5,630.5 444.5,630.5 447.5,630.5 450.5,630.5 453.5,630.5 456.5,630.5 459.5,630.5 462.5,630.5 465.5,630.5 468.5,630.5 471.5,630.5 474.5,630.5 477.5,630.5 480.5,630.5 483.5,630.5 486.5,630.5 489.5,630.5 492.5,630.5 495.5,630.5 498.5,630.5 501.5,630.5 504.5,630.5 507.5,630.5 510.5,630.5 513.5,630.5 516.5,630.5 519.5,630.5 522.5,630.5 525.5,630.5 528.5,630.5 531.5,630.5 534.5,630.5 537.5,577.0 540.5,630.5 543.5,684.0 546.5,630.5 549.5,630.5 552.5,630.5 555.5,630.5 558.5,577.0 561.5,684.0 564.5,630.5 567.5,630.5 570.5,577.0 573.5,630.5 576.5,630.5 579.5,630.5 582.5,630.5 585.5,630.5 588.5,630.5 591.5,630.5 594.5,630.5 597.5,630.5 600.5,630.5 603.5,630.5 606.5,630.5 609.5,630.5 612.5,630.5 615.5,630.5 618.5,630.5 621.5,630.5 624.5,630.5 627.5,630.5 630.5,630.5 633.5,630.5 636.5,630.5 639.5,630.5 642.5,630.5 645.5,630.5 648.5,630.5 651.5,630.5 654.5,630.5 657.5,630.5 660.5,630.5 663.5,630.5 666.5,630.5 669.5,630.5 672.5,630.5 675.5,630.5 678.5,630.5 681.5,630.5 684.5,630.5 687.5,630.5 690.5,630.5 693.5,630.5 696.5,630.5 699.5,630.5 702.5,630.5 705.5,630.5 708.5,630.5 711.5,630.5 714.5,630.5 717.5,630.5 720.5,630.5 723.5,630.5 726.5,630.5 729.5,630.5 732.5,630.5 735.5,630.5 738.5,630.5 741.5,630.5 744.5,630.5 747.5,630.5 750.5,630.5 753.5,630.5 756.5,630.5 759.5,630.5 762.5,630.5 765.5,630.5 768.5,630.5 771.5,630.5 774.5,630.5 777.5,630.5 780.5,630.5 783.5,630.5 786.5,630.5 789.5,630.5 792.5,630.5 795.5,684.0 798.5,577.0 801.5,630.5 804.5,630.5 807.5,630.5 810.5,630.5 813.5,630.5 816.5,630.5 819.5,630.5 822.5,630.5 825.5,630.5 828.5,630.5 831.5,630.5 834.5,630.5 837.5,630.5 840.5,630.5 843.5,630.5 846.5,630.5 849.5,684.0 852.5,630.5 855.5,630.5 858.5,630.5 861.5,630.5 864.5,577.0 867.5,630.5 870.5,630.5 873.5,684.0 876.5,630.5 879.5,630.5 882.5,577.0 885.5,684.0 888.5,630.5 891.5,630.5 894.5,630.5 897.5,630.5 900.5,630.5 903.5,630.5 906.5,630.5 909.5,577.0 912.5,630.5 915.5,630.5 918.5,630.5 921.5,630.5 924.5,630.5 927.5,630.5 930.5,630.5 933.5,630.5 936.5,630.5 939.5,630.5 942.5,630.5 945.5,630.5 948.5,630.5 951.5,630.5 954.5,630.5 957.5,630.5 960.5,630.5 963.5,630.5 966.5,630.5 969.5,630.5 972.5,630.5 975.5,630.5 978.5,630.5 981.5,630.5 984.5,630.5 987.5,630.5 990.5,630.5 993.5,630.5 996.5,630.5 999.5,630.5 1002.5,630.5 1005.5,630.5 1008.5,630.5 1011.5,630.5 1014.5,630.5 1017.5,630.5 1020.5,630.5 1023.5,630.5 1026.5,630.5 1029.5,630.5 1032.5,630.5 1035.5,630.5 1038.5,630.5 1041.5,630.5 1044.5,630.5 1047.5,630.5 1050.5,630.5 1053.5,630.5 1056.5,630.5 1059.5,630.5 1062.5,630.5 1065.5,630.5 1068.5,630.5 1071.5,630.5 1074.5,630.5 1077.5,630.5 1080.5,630.5 1083.5,630.5 1086.5,630.5 1089.5,630.5 1092.5,630.5 1095.5,630.5 1098.5,630.5 1101.0,630.5" fill="none" stroke="#4646ff" stroke-width="1" /></svg>
<div class="t cj" style="left:88px;top:114px;color:#ff3232;width:24px">欧元</div>
<div class="t" style="left:112px;top:114px;color:#ff3232">/</div>
<div class="t cj" style="left:115px;top:114px;color:#ff3232;width:24px">美元</div>
<div class="t" style="left:143px;top:114px;color:#ffff00">MA5: 1.1340</div>
<div class="t" style="left:214px;top:114px;color:#ff00ff">MA10: 1.1339</div>
<div class="t" style="left:292px;top:114px;color:#ffffa0">MA30: 1.1340</div>
<div class="t" style="left:370px;top:114px;color:#4646ff">MA60: 1.1334</div>
<div class="t" style="left:89px;top:376px;color:#ffff00">MACD(26,12,9) DIFF: 0.0001</div>
<div class="t" style="left:249px;top:376px;color:#ffffff">DEA: 0.0001</div>
<div class="t" style="left:321px;top:376px;color:#00e600">MACD: 0.0001</div>
<div class="t" style="left:89px;top:549px;color:#ff3c3c">CMA QQ: 0.0005</div>
<div class="t" style="left:183px;top:549px;color:#4646ff">QQ2: 0.0000</div>
<div class="t" style="left:1017px;top:130px;color:#c8c8c8">1.1532</div>
<div class="t" style="left:141px;top:359px;color:#c8c8c8">1.1277</div>
<svg class="a" style="left:0;top:0" width="1366" height="746"><path d="M1005.500 130.800 L1015.500 136" stroke="#d8d8d8" fill="none"/><path d="M1001.800 128.800 L1006.200 129.200 L1002.200 133 Z" fill="#d8d8d8"/><path d="M128.500 372 L139.500 367" stroke="#d0d0d0" fill="none"/><path d="M125.800 374 L126.200 370 L130 373.200 Z" fill="#d0d0d0"/></svg>
<div class="t r" style="left:57px;width:30px;top:686px;color:#ff3c3c">29</div>
<div class="t r" style="left:173px;width:30px;top:686px;color:#ff3c3c">30</div>
<div class="t r" style="left:461px;width:30px;top:686px;color:#ff3c3c">02</div>
<div class="t r" style="left:1037px;width:30px;top:686px;color:#ff3c3c">04</div>
<div class="a" style="left:720px;top:684px;width:58px;height:18px;background:#3c0090;border:1px solid #c80000"></div>
<div class="t" style="left:722px;top:686px;color:#ff3c3c">02030758</div>
<div class="a" style="left:1103px;top:94px;width:261px;height:311px;border:1px solid #f0f0f0;background:#000"></div>
<div class="t cj" style="left:1198.5px;top:100px;font-size:16px;line-height:20px;height:20px;color:#ffff00;width:32px">欧元</div>
<div class="t" style="left:1229px;top:100px;font-size:16px;line-height:20px;height:20px;color:#ffff00"><b>/</b></div>
<div class="t cj" style="left:1232.5px;top:100px;font-size:16px;line-height:20px;height:20px;color:#ffff00;width:32px">美元</div>
<div class="t" style="left:1104px;width:258px;top:127px;text-align:center;font-size:13.5px;line-height:16px;height:16px;color:#c0c0c0">EURUSD</div>
<div class="a" style="left:1104px;top:147px;width:260px;height:1px;background:#c00000"></div>
<div class="a" style="left:1104px;top:250px;width:260px;height:1px;background:#c00000"></div>
<div class="a" style="left:1104px;top:353px;width:260px;height:1px;background:#c00000"></div>
<div class="row" style="top:151px"><span class="k cj">现价</span><span class="v" style="color:#ff3c3c">1.1459</span></div>
<div class="row" style="top:177px"><span class="k cj">涨跌</span><span class="v" style="color:#ff3c3c">0.0005</span></div>
<div class="row" style="top:202px"><span class="k cj">涨幅</span><span class="v" style="color:#ff3c3c">+0.0437%</span></div>
<div class="row" style="top:227px"><span class="k cj">震幅</span><span class="v" style="color:#28d8ff">0.25%</span></div>
<div class="row" style="top:253px"><span class="k cj">昨收</span><span class="v" style="color:#ffffff">1.1454</span></div>
<div class="row" style="top:279px"><span class="k cj">开盘</span><span class="v" style="color:#ff3c3c">1.1456</span></div>
<div class="row" style="top:305px"><span class="k cj">最高</span><span class="v" style="color:#ff3c3c">1.1482</span></div>
<div class="row" style="top:330px"><span class="k cj">最低</span><span class="v" style="color:#00e600">1.1453</span></div>
<div class="row" style="top:357px"><span class="k cj">买入</span><span class="v" style="color:#ff3c3c">1.1459</span></div>
<div class="row" style="top:382px"><span class="k cj">卖出</span><span class="v" style="color:#ff3c3c">1.1462</span></div>
<svg class="a" style="left:0;top:0" width="1366" height="746" viewBox="0 0 1366 746" shape-rendering="crispEdges">
<line x1="1103" y1="405.5" x2="1364" y2="405.5" stroke="#c80000"/>
<line x1="1103" y1="427.5" x2="1364" y2="427.5" stroke="#c80000"/>
<line x1="1103" y1="448.5" x2="1364" y2="448.5" stroke="#c80000"/>
<line x1="1103" y1="468.5" x2="1364" y2="468.5" stroke="#c80000"/>
<line x1="1103" y1="489.5" x2="1364" y2="489.5" stroke="#c80000"/>
<line x1="1103" y1="510.5" x2="1364" y2="510.5" stroke="#c80000"/>
<line x1="1103" y1="532.5" x2="1364" y2="532.5" stroke="#c80000"/>
<line x1="1103" y1="575.5" x2="1364" y2="575.5" stroke="#c80000"/>
<line x1="1103" y1="596.5" x2="1364" y2="596.5" stroke="#c80000"/>
<line x1="1103" y1="617.5" x2="1364" y2="617.5" stroke="#c80000"/>
<line x1="1103" y1="638.5" x2="1364" y2="638.5" stroke="#c80000"/>
<line x1="1103" y1="659.5" x2="1364" y2="659.5" stroke="#c80000"/>
<line x1="1103" y1="680.5" x2="1364" y2="680.5" stroke="#c80000"/>
<line x1="1103" y1="701.5" x2="1364" y2="701.5" stroke="#c80000"/>
<rect x="1103" y="553" width="261" height="3" fill="#c80000"/>
<rect x="1103" y="405" width="2" height="150" fill="#c80000"/>
<rect x="1103" y="555" width="1" height="147" fill="#c80000"/>
<line x1="1147.5" y1="405" x2="1147.5" y2="705" stroke="#c80000"/>
<line x1="1190.5" y1="405" x2="1190.5" y2="705" stroke="#c80000"/>
<line x1="1234.5" y1="405" x2="1234.5" y2="705" stroke="#c80000"/>
<line x1="1277.5" y1="405" x2="1277.5" y2="705" stroke="#c80000"/>
<line x1="1320.5" y1="405" x2="1320.5" y2="705" stroke="#c80000"/>
<line x1="1363.500" y1="405" x2="1363.500" y2="702" stroke="#c80000"/>
<line x1="1126.5" y1="406" x2="1126.5" y2="701" stroke="#b40000" stroke-dasharray="1 2"/>
<line x1="1169.5" y1="406" x2="1169.5" y2="701" stroke="#b40000" stroke-dasharray="1 2"/>
<line x1="1212.5" y1="406" x2="1212.5" y2="701" stroke="#b40000" stroke-dasharray="1 2"/>
<line x1="1255.5" y1="406" x2="1255.5" y2="701" stroke="#b40000" stroke-dasharray="1 2"/>
<line x1="1298.5" y1="406" x2="1298.5" y2="701" stroke="#b40000" stroke-dasharray="1 2"/>
<line x1="1342.5" y1="406" x2="1342.5" y2="701" stroke="#b40000" stroke-dasharray="1 2"/>
<polyline points="1104.4,537.3 1106.6,503.0 1107.7,449.4 1108.7,475.0 1109.8,528.8 1110.9,490.0 1112.2,478.0 1113.0,511.6 1114.0,531.0 1115.2,492.0 1116.9,481.5 1118.0,449.0 1118.8,406.4 1119.5,434.0 1120.5,453.6 1121.6,479.4 1122.7,455.8 1123.8,470.8 1124.8,483.7 1125.9,462.0 1127.0,500.9 1128.0,550.0 1129.1,533.0 1130.2,509.4 1131.3,537.3 1132.3,520.0" fill="none" stroke="#c0c0c0" stroke-width="1.6" shape-rendering="auto"/>
</svg>
<div class="t" style="left:1105px;top:703px;color:#ff3c3c">08:00</div>
<div class="t" style="left:1148px;top:703px;color:#ff3c3c">12:00</div>
<div class="t" style="left:1192px;top:703px;color:#ff3c3c">16:00</div>
<div class="t" style="left:1235px;top:703px;color:#ff3c3c">20:00</div>
<div class="t" style="left:1279px;top:703px;color:#ff3c3c">00:00</div>
<div class="t" style="left:1322px;top:703px;color:#ff3c3c">04:00</div>
<div class="a" style="left:1132px;top:422px;width:250px;height:176px;border:1px solid #6e7f94;border-radius:7px;background:linear-gradient(100deg,#cfdceb,#dbe6f2 30%,#c8d6e6 60%,#d4e0ee);box-shadow:inset 0 0 0 1px rgba(255,255,255,.7)"></div>
<div class="t cj" style="left:1140px;top:429px;color:#000;text-shadow:0 0 5px #fff,0 0 5px #fff;width:24px">画线</div>
<div class="t" style="left:1165.5px;top:429px;color:#000;text-shadow:0 0 5px #fff,0 0 5px #fff">/</div>
<div class="t cj" style="left:1170px;top:429px;color:#000;text-shadow:0 0 5px #fff,0 0 5px #fff;width:24px">设置</div>
<div class="a" style="left:1139px;top:450px;width:240px;height:141px;background:#f0f0f0;border:1px solid #8c97a6"></div>
<div class="a" style="left:1140px;top:546px;width:230px;height:1px;background:#a0a0a0"></div>
<div class="a" style="left:1140px;top:547px;width:230px;height:1px;background:#fff"></div>
<svg class="a" style="left:0;top:0" width="1366" height="746" viewBox="0 0 1366 746">
<path d="M1154 480 L1166 468" stroke="#2a5caa" stroke-width="1"/><path d="M1165.500 485 L1171.500 479.500 L1171.500 485 Z" fill="#000"/>
<path d="M1180.5 478 L1191 468" stroke="#2a5caa" stroke-width="1"/><rect x="1179" y="477" width="3" height="3" fill="#000"/>
<path d="M1204.500 468.500 L1215.500 479.500" stroke="#2a5caa" stroke-width="1"/><rect x="1203" y="467" width="3" height="3" fill="#000"/><rect x="1214" y="478" width="3" height="3" fill="#000"/>
<path d="M1153 503 L1159 513 M1160 499 L1166 509" stroke="#2a5caa" stroke-width="1"/>
<path d="M1178 508 L1184 499 M1181 511 L1188 501 M1185 512 L1191 503" stroke="#2a5caa" stroke-width="1"/>
<line x1="1227.5" y1="462" x2="1227.5" y2="538" stroke="#404040" shape-rendering="crispEdges"/>
<line x1="1286.5" y1="462" x2="1286.5" y2="538" stroke="#404040" shape-rendering="crispEdges"/>
<line x1="1345.5" y1="462" x2="1345.5" y2="538" stroke="#404040" shape-rendering="crispEdges"/>
<rect x="1238" y="466" width="3" height="16" fill="#2a5caa"/><path d="M1243.5 466 v16 M1246.5 475 v7 M1249.5 475 v7" stroke="#2a5caa" shape-rendering="crispEdges"/><text x="1245" y="473" font-size="9" font-weight="bold" font-family="Liberation Serif" fill="#000">F</text>
<rect x="1263" y="466" width="3" height="16" fill="#2a5caa"/><path d="M1268.5 466 v16 M1271.5 475 v7 M1274.5 475 v7" stroke="#2a5caa" shape-rendering="crispEdges"/><text x="1270" y="473" font-size="9" font-weight="bold" font-family="Liberation Serif" fill="#000">L</text>
<rect x="1238" y="498" width="3" height="16" fill="#2a5caa"/><path d="M1243.5 498 v16 M1246.5 507 v7 M1249.5 507 v7" stroke="#2a5caa" shape-rendering="crispEdges"/><text x="1245" y="505" font-size="9" font-weight="bold" font-family="Liberation Serif" fill="#000">T</text>
<rect x="1263" y="498" width="3" height="16" fill="#2a5caa"/><path d="M1268.5 498 v16 M1271.5 507 v7 M1274.5 507 v7" stroke="#2a5caa" shape-rendering="crispEdges"/><text x="1270" y="505" font-size="9" font-weight="bold" font-family="Liberation Serif" fill="#000">G</text>
<path d="M1295 468.5 h9 M1295 470.5 h9 M1295 473.5 h9 M1295 476.5 h9 M1295 478.5 h9" stroke="#2a5caa" shape-rendering="crispEdges"/><path d="M1295 478.5 h16" stroke="#2a5caa" stroke-width="1.5"/><text x="1302.500" y="475" font-size="9.500" font-weight="bold" font-family="Liberation Sans" fill="#000">%</text>
<path d="M1320 469.5 h8 M1320 472.5 h8 M1320 474.5 h8" stroke="#2a5caa" shape-rendering="crispEdges"/><path d="M1320 480 h16" stroke="#2a5caa" stroke-width="2"/><text x="1329" y="474" font-size="9.500" font-weight="bold" font-family="Liberation Serif" fill="#000">G</text>
<path d="M1295 501.5 h16 M1295 503.5 h16 M1295 505.5 h16 M1295 508.5 h16 M1295 510.5 h16" stroke="#2a5caa" shape-rendering="crispEdges"/>
<path d="M1370 469.500 H1356.500 V479.500 H1370" stroke="#2a5caa" fill="none" shape-rendering="crispEdges"/><rect x="1355" y="467" width="3" height="3" fill="#000"/>
<rect x="1354" y="499" width="14" height="14" fill="#2a5caa"/><path d="M1357.5 499 v14 M1360.5 499 v14 M1363.5 499 v14 M1354 502.5 h12 M1354 505.5 h12 M1354 508.5 h12" stroke="#e8eef8" stroke-width=".8"/>
</svg>
<div class="t cj" style="left:1172px;top:525px;color:#000;width:24px">趋势</div>
<div class="t cj" style="left:1243px;top:525px;color:#000;width:24px">时间</div>
<div class="t cj" style="left:1302px;top:525px;color:#000;width:24px">空间</div>
<div class="t cj" style="left:1150px;top:564px;color:#000;width:24px">名称</div>
<div class="a" style="left:1181px;top:560px;width:80px;height:20px;background:#f0f0f0;border:1px solid #a0a0a0;border-right-color:#fff;border-bottom-color:#fff;box-shadow:inset 1px 1px 0 #696969"></div>
<div class="a" style="left:1274px;top:560px;width:20px;height:20px;background:#f0f0f0;border:1px solid #fff;border-right-color:#696969;border-bottom-color:#696969;box-shadow:inset -1px -1px 0 #a0a0a0"></div>
<svg class="a" style="left:1278px;top:563px" width="12" height="12" viewBox="0 0 12 12" shape-rendering="crispEdges"><rect x="1" y="2" width="10" height="8.500" rx="1" fill="#f0f0f0" stroke="#404040" stroke-width="1.200" shape-rendering="auto"/><path d="M2.500 4.500 h7 M2.500 6.500 h7 M2.500 8.500 h7" stroke="#404040"/><path d="M3.500 0.500 v2 M8.500 0.500 v2" stroke="#404040"/></svg>
<div class="t cj" style="left:1307px;top:564px;color:#000;width:24px">线形</div>
<div class="a" style="left:1335px;top:560px;width:40px;height:20px;background:#fff;border:1px solid #a0a0a0;box-shadow:inset 1px 1px 0 #696969"></div>
<div class="t cj" style="left:1338px;top:563px;color:#000;width:24px">直线</div>
<div class="a" style="left:1347px;top:563px;width:45px;height:45px;border-radius:50%;background:radial-gradient(circle at 40% 30%,#7fd890,#4cc060 45%,#2c9c48 80%);border:2px solid #e6ece6;box-shadow:0 0 2px rgba(0,0,0,.5)"></div>
<div class="t" style="left:1353px;top:578px;color:#fff;font-weight:bold;font-size:11px">48</div>
<svg class="a" style="left:0;top:0" width="1366" height="746" viewBox="0 0 1366 746">
<path d="M25.6 703 L70.9 703 L65.1 717 L32.8 717 Z" fill="#8b0000"/>
<path d="M73.3 703 L106.6 703 L110.2 710.8 L107.6 717 L71.8 717 L69.2 710.8 Z" fill="#808080"/>
<path d="M108.7 703 L145.1 703 L148.7 710.8 L146.1 717 L114.8 717 Z" fill="#808080"/>
<path d="M147.2 703 L185.1 703 L188.7 710.8 L186.1 717 L153.3 717 Z" fill="#808080"/>
<path d="M187.2 703 L223.6 703 L227.2 710.8 L224.6 717 L193.3 717 Z" fill="#808080"/>
<path d="M225.7 703 L267.6 703 L271.2 710.8 L268.6 717 L231.8 717 Z" fill="#808080"/>
<path d="M269.7 703 L301.1 703 L304.7 710.8 L302.1 717 L275.8 717 Z" fill="#808080"/>
<path d="M303.2 703 L332.6 703 L336.2 710.8 L333.6 717 L309.3 717 Z" fill="#808080"/>
<path d="M334.7 703 L364.1 703 L367.7 710.8 L365.1 717 L340.8 717 Z" fill="#808080"/>
<path d="M366.2 703 L400.1 703 L403.7 710.8 L401.1 717 L372.3 717 Z" fill="#808080"/>
<path d="M402.2 703 L440.1 703 L443.7 710.8 L441.1 717 L408.3 717 Z" fill="#808080"/>
<path d="M442.2 703 L481.6 703 L485.2 710.8 L482.6 717 L448.3 717 Z" fill="#808080"/>
<path d="M483.7 703 L529.1 703 L532.7 710.8 L530.1 717 L489.8 717 Z" fill="#808080"/>
<path d="M531.2 703 L564.1 703 L567.7 710.8 L565.1 717 L537.3 717 Z" fill="#808080"/>
<path d="M566.2 703 L605.0 703 L597.5 717 L572.3 717 Z" fill="#808080"/>
</svg>
<div class="tab" style="left:26.6px;width:43.4px;color:#a8ffff">CMA</div>
<div class="tab" style="left:71.0px;width:38.0px;color:#000">BOLL</div>
<div class="tab" style="left:111.5px;width:36.0px;color:#000">BIAS</div>
<div class="tab" style="left:150.0px;width:37.5px;color:#000">MIKE</div>
<div class="tab" style="left:190.0px;width:36.0px;color:#000">ROC</div>
<div class="tab" style="left:228.5px;width:41.5px;color:#000">ARBR</div>
<div class="tab" style="left:272.5px;width:31.0px;color:#000">DMI</div>
<div class="tab" style="left:306.0px;width:29.0px;color:#000">RSI</div>
<div class="tab" style="left:337.5px;width:29.0px;color:#000">ASI</div>
<div class="tab" style="left:369.0px;width:33.5px;color:#000">OSC</div>
<div class="tab" style="left:405.0px;width:37.5px;color:#000">VMA</div>
<div class="tab" style="left:445.0px;width:39.0px;color:#000">MTM</div>
<div class="tab" style="left:486.5px;width:45.0px;color:#000">MASS</div>
<div class="tab" style="left:534.0px;width:32.5px;color:#000">CDP</div>
<div class="tab" style="left:569.0px;width:36.0px;color:#000">PSY</div>
<div class="a" style="left:2px;top:718px;width:1362px;height:2px;background:#c80000"></div>
<div class="a" style="left:2px;top:735px;width:1362px;height:1px;background:#c80000"></div>
<div class="a" style="left:68px;top:719px;width:2px;height:17px;background:#c80000"></div>
<div class="a" style="left:1209px;top:719px;width:2px;height:17px;background:#c80000"></div>
<div class="a" style="left:1233px;top:719px;width:2px;height:17px;background:#c80000"></div>
<div class="a" style="left:1257px;top:719px;width:2px;height:17px;background:#c80000"></div>
<div class="a" style="left:1279px;top:719px;width:2px;height:17px;background:#c80000"></div>
<div class="a" style="left:1287px;top:719px;width:2px;height:17px;background:#c80000"></div>
<div class="a" style="left:1311px;top:719px;width:2px;height:17px;background:#c80000"></div>
<div class="t cj" style="left:5px;top:721px;color:#e00000;font-style:italic;font-weight:bold;font-size:8.5px;transform:scaleY(.85);filter:blur(.3px);width:59.5px">招商银行外汇通</div>
<div class="t cj" style="left:743px;top:720px;color:#ff28ff;font-size:12px;width:84px">招商银行欢迎您</div>
<div class="t" style="left:828px;top:720px;color:#ff28ff;font-size:12px">!</div>
<div class="t" style="left:1318px;top:720px;font-size:10.5px;color:#f020ff;text-shadow:-0.7px 0 0 #3838ff">10:40:24</div>
<svg class="a" style="left:0;top:0" width="1366" height="746" viewBox="0 0 1366 746" shape-rendering="crispEdges">
<rect x="1219.500" y="721.500" width="8" height="8" fill="#a8a8ff" stroke="#e8e8e8"/><rect x="1215.500" y="724.500" width="8" height="7" fill="#a8a8ff" stroke="#e8e8e8"/><path d="M1214 733.500 h10 M1225 731.500 h4" stroke="#b8b8b8"/>
<g transform="translate(0 .7)"><rect x="1242.500" y="723.500" width="8" height="8" fill="#c0c0c0" stroke="#fff"/><rect x="1244" y="725" width="5" height="5" fill="#c0c0c0" stroke="#000" stroke-width=".6"/><path d="M1241 722 l-2 -2 M1252 722 l2 -2 M1241 733 l-2 2 M1252 733 l2 2 M1240 727.500 h-2 M1253 727.500 h2 M1246.500 722 v-2 M1246.500 733 v2" stroke="#e0e0e0" shape-rendering="auto"/></g>
<path d="M1294 723 h11 v8 h-3 v3 l-4 -3 h-4 Z" fill="#ffa000"/><path d="M1296 725.500 h7 M1296 727.500 h7" stroke="#201000"/>
</svg>
<div class="t" style="left:1262px;top:720px;width:16px;color:#ffe800;font-weight:bold;font-size:14px;line-height:15px;height:15px;text-shadow:1px 0 0 #ff0000,-1px 0 0 #ff0000,0 1px 0 #ff0000,0 -1px 0 #ff0000">记</div>
<div class="a" style="left:0;top:736px;width:1366px;height:2px;background:#fdfdfd"></div>
<div class="a" style="left:0;top:738px;width:1366px;height:8px;background:linear-gradient(90deg,#c3d0de 0,#a9bdd3 6%,#8fa9c6 22%,#a8c0da 40%,#bdd1e6 50%,#a4bad2 62%,#93a9c2 80%,#8fa5be 100%)"></div>
<div class="a" style="left:0;top:738px;width:1366px;height:1px;background:#5f6e80"></div>
<div class="a" style="left:0;top:739px;width:1366px;height:1px;background:rgba(225,235,245,.85)"></div>
<div class="a" style="left:9px;top:733px;width:36px;height:36px;border-radius:50%;background:radial-gradient(circle at 50% 42%,#e4eef8 0,#9fbcd8 40%,#4a7cb0 62%,#2a5a8c 70%);border:1px solid #1e4a78;box-shadow:0 0 2px 1px rgba(230,240,250,.9)"></div>
<div class="a" style="left:20px;top:741px;width:8px;height:6px;background:#e8601c;border-radius:2px 0 0 0;transform:skewY(-8deg)"></div>
<div class="a" style="left:29px;top:740px;width:8px;height:6px;background:#6cb82c;border-radius:0 2px 0 0;transform:skewY(-8deg)"></div>
<div class="a" style="left:150px;top:739px;width:44px;height:12px;border:1px solid #62748a;border-radius:3px;background:rgba(236,243,250,.92);box-shadow:inset 0 0 0 1px #fff"></div>
<div class="a" style="left:196px;top:739px;width:44px;height:12px;border:1px solid #62748a;border-radius:3px;background:rgba(236,243,250,.92);box-shadow:inset 0 0 0 1px #fff"></div>
<div class="a" style="left:242px;top:739px;width:44px;height:12px;border:1px solid #62748a;border-radius:3px;background:rgba(236,243,250,.92);box-shadow:inset 0 0 0 1px #fff"></div>
<div class="a" style="left:288px;top:739px;width:44px;height:12px;border:1px solid #62748a;border-radius:3px;background:rgba(236,243,250,.92);box-shadow:inset 0 0 0 1px #fff"></div>
<div class="a" style="left:1351px;top:739px;width:16px;height:9px;border:1px solid #6c7c90;background:linear-gradient(#b4c4d6,#9badc2)"></div>
</body></html>
